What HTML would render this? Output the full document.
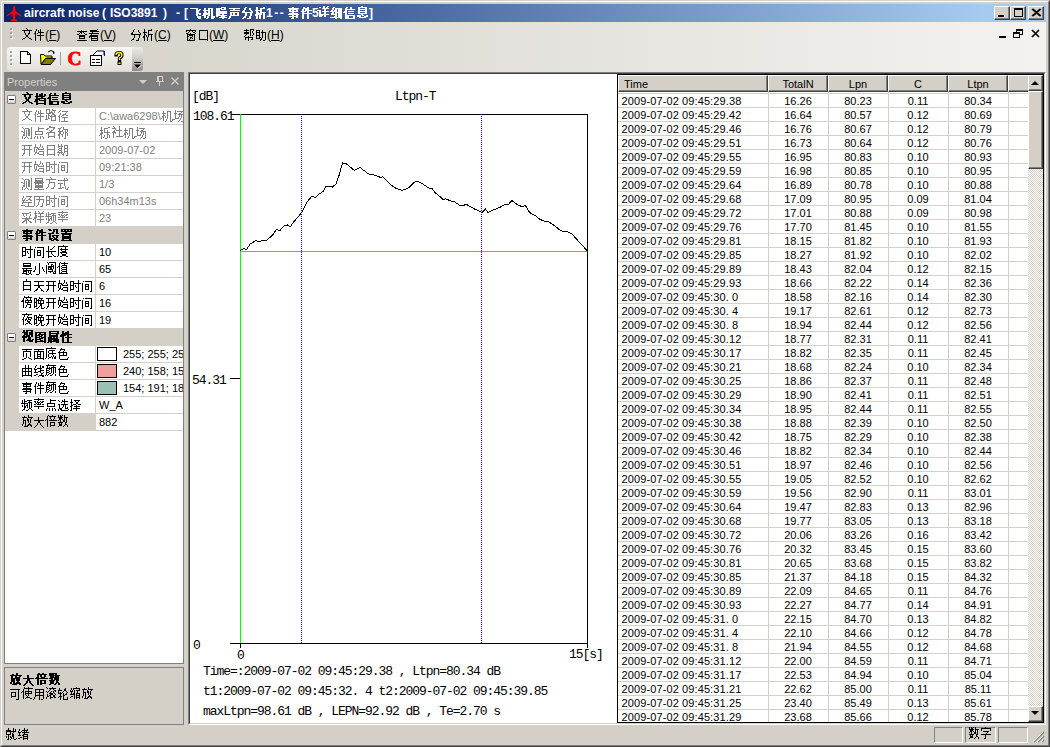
<!DOCTYPE html><html><head><meta charset="utf-8"><style>
html,body{margin:0;padding:0}
body{width:1050px;height:747px;overflow:hidden;position:relative;background:#D4D0C8;font-family:"Liberation Sans",sans-serif;font-size:11px;color:#000}
div{position:absolute;box-sizing:border-box}
.t{white-space:nowrap;line-height:1}
.m{font-family:"Liberation Mono",monospace}
svg{position:absolute;left:0;top:0}
</style></head><body>
<div style="left:0px;top:0px;width:1050px;height:747px;border-top:1px solid #D4D0C8;border-left:1px solid #D4D0C8;border-right:1px solid #404040;border-bottom:1px solid #404040"></div>
<div style="left:1px;top:1px;width:1048px;height:745px;border-top:1px solid #fff;border-left:1px solid #fff;border-right:1px solid #808080;border-bottom:1px solid #808080"></div>
<div style="left:4px;top:4px;width:1042px;height:18px;background:linear-gradient(to right,#0A246A,#A6CAF0 94%)"></div>
<div class="t" style="left:24px;top:6px;color:#fff;font-weight:bold;font-size:12px;margin-top:1px">aircraft noise</div>
<div class="t" style="left:102px;top:6px;color:#fff;font-weight:bold;font-size:12px;margin-top:1px">(</div>
<div class="t" style="left:110px;top:6px;color:#fff;font-weight:bold;font-size:12px;margin-top:1px">ISO3891</div>
<div class="t" style="left:163px;top:6px;color:#fff;font-weight:bold;font-size:12px;margin-top:1px">)</div>
<div class="t" style="left:176px;top:6px;color:#fff;font-weight:bold;font-size:12px;margin-top:1px">-</div>
<div class="t" style="left:184px;top:6px;color:#fff;font-weight:bold;font-size:12px;margin-top:1px">[</div>
<div class="t" style="left:266px;top:6px;color:#fff;font-weight:bold;font-size:12px;margin-top:1px;letter-spacing:1.6px">1--</div>
<div class="t" style="left:312px;top:6px;color:#fff;font-weight:bold;font-size:12px;margin-top:1px">5</div>
<div class="t" style="left:369px;top:6px;color:#fff;font-weight:bold;font-size:12px;margin-top:1px">]</div>
<svg width="1050" height="747" style="z-index:2"><path d="M13.5 6 H15 L15.5 11 L21.5 15.5 V16.5 L15.5 13.5 L15 19 L17 20 V21 H11 V20 L13 19 L12.5 13.5 L6.5 16.5 V15.5 L12.5 11 Z" fill="#F00"/></svg>
<div style="left:994px;top:6px;width:16px;height:14px;background:#D4D0C8;border-top:1px solid #fff;border-left:1px solid #fff;border-right:1px solid #404040;border-bottom:1px solid #404040;box-shadow:inset -1px -1px 0 #808080"></div>
<div style="left:1010px;top:6px;width:16px;height:14px;background:#D4D0C8;border-top:1px solid #fff;border-left:1px solid #fff;border-right:1px solid #404040;border-bottom:1px solid #404040;box-shadow:inset -1px -1px 0 #808080"></div>
<div style="left:1028px;top:6px;width:16px;height:14px;background:#D4D0C8;border-top:1px solid #fff;border-left:1px solid #fff;border-right:1px solid #404040;border-bottom:1px solid #404040;box-shadow:inset -1px -1px 0 #808080"></div>
<div style="left:998px;top:15px;width:6px;height:2px;background:#000"></div>
<div style="left:1014px;top:8px;width:9px;height:9px;border:1px solid #000;border-top:2px solid #000"></div>
<svg width="1050" height="747" style="z-index:2"><path d="M1032 9 L1040 16 M1040 9 L1032 16 M1033 9 L1041 16 M1041 9 L1033 16" stroke="#000" stroke-width="1.2" fill="none"/></svg>
<div style="left:4px;top:22px;width:1042px;height:50px;background:linear-gradient(to right,#D4D0C8 0%,#DAD7CF 20%,#F3F2EF 100%)"></div>
<div style="left:11px;top:29px;width:2px;height:2px;background:#fff"></div>
<div style="left:10px;top:28px;width:2px;height:2px;background:#A0A0A0"></div>
<div style="left:11px;top:33px;width:2px;height:2px;background:#fff"></div>
<div style="left:10px;top:32px;width:2px;height:2px;background:#A0A0A0"></div>
<div style="left:11px;top:37px;width:2px;height:2px;background:#fff"></div>
<div style="left:10px;top:36px;width:2px;height:2px;background:#A0A0A0"></div>
<div class="t" style="left:45px;top:29px;font-size:12px">(<u>F</u>)</div>
<div class="t" style="left:100px;top:29px;font-size:12px">(<u>V</u>)</div>
<div class="t" style="left:154px;top:29px;font-size:12px">(<u>C</u>)</div>
<div class="t" style="left:209px;top:29px;font-size:12px">(<u>W</u>)</div>
<div class="t" style="left:267px;top:29px;font-size:12px">(<u>H</u>)</div>
<div style="left:999px;top:36px;width:7px;height:2px;background:#000"></div>
<div style="left:1016px;top:29px;width:7px;height:6px;border:1px solid #000;border-top:2px solid #000"></div>
<div style="left:1013px;top:32px;width:7px;height:6px;border:1px solid #000;border-top:2px solid #000;background:#F0EFEC"></div>
<svg width="1050" height="747" style="z-index:2"><path d="M1032 30 L1039 37 M1039 30 L1032 37" stroke="#000" stroke-width="1.6" fill="none"/></svg>
<div style="left:7px;top:47px;width:126px;height:24px;background:linear-gradient(to bottom,#F8F7F4,#E3E0D9);border-radius:3px 0 0 3px"></div>
<div style="left:132px;top:47px;width:11px;height:24px;background:linear-gradient(to bottom,#ECEAE6 0%,#D0CEC8 45%,#8C8C8C 100%);border-radius:0 3px 3px 0"></div>
<div style="left:11px;top:52px;width:2px;height:2px;background:#fff"></div>
<div style="left:10px;top:51px;width:2px;height:2px;background:#A0A0A0"></div>
<div style="left:11px;top:56px;width:2px;height:2px;background:#fff"></div>
<div style="left:10px;top:55px;width:2px;height:2px;background:#A0A0A0"></div>
<div style="left:11px;top:60px;width:2px;height:2px;background:#fff"></div>
<div style="left:10px;top:59px;width:2px;height:2px;background:#A0A0A0"></div>
<div style="left:11px;top:64px;width:2px;height:2px;background:#fff"></div>
<div style="left:10px;top:63px;width:2px;height:2px;background:#A0A0A0"></div>
<div style="left:60px;top:52px;width:1px;height:13px;background:#A0A0A0"></div>
<svg width="1050" height="747" style="z-index:2">
<path d="M20.5 51.5 H27.5 L30.5 54.5 V63.5 H20.5 Z" fill="#fff" stroke="#000" shape-rendering="crispEdges"/><path d="M27.5 52 V54.5 H30" stroke="#000" fill="none" shape-rendering="crispEdges"/>
<path d="M40.5 54.5 H44 L45 56 H52 V58 H46 L41 64 Z" fill="#FFFF00" stroke="#000"/>
<path d="M41 64.5 L46 58.5 H55.5 L50.5 64.5 Z" fill="#808000" stroke="#000"/>
<path d="M48 52 Q51 49 54 52" stroke="#000" fill="none"/><path d="M53 51 L55 53 L53 54" fill="#000"/>
<text x="67.5" y="64.8" font-family="Liberation Serif" font-weight="bold" font-size="19.5" fill="#F00" stroke="#F00" stroke-width="0.8">C</text>
<rect x="90.5" y="55.5" width="11" height="10" fill="#fff" stroke="#000"/>
<path d="M92 59.5 H95 M96 59.5 H100 M92 62.5 H95 M96 62.5 H100" stroke="#000"/>
<path d="M93 55 L97 51 H104 V55" fill="#fff" stroke="#000"/><path d="M104.5 51 V56" stroke="#00F"/>
<path d="M116 55 Q116 52.5 119 52.5 Q122 52.5 122 55 Q122 57 119.5 58 V60.5" stroke="#000" stroke-width="3.2" fill="none" stroke-linecap="square"/><rect x="117.5" y="61.5" width="4" height="3.5" fill="#000"/><path d="M116 55 Q116 52.5 119 52.5 Q122 52.5 122 55 Q122 57 119.5 58 V60" stroke="#FF0" stroke-width="1.3" fill="none"/><rect x="118.5" y="62.5" width="2" height="1.5" fill="#FF0"/>
<path d="M134 62.5 H141" stroke="#000" shape-rendering="crispEdges"/><path d="M134 64.5 H141 L137.5 68 Z" fill="#000"/><path d="M138 68.5 L141 65.5" stroke="#fff" stroke-width="0.8"/>
</svg>
<div style="left:4px;top:72px;width:180px;height:19px;background:#808080"></div>
<div class="t" style="left:7px;top:77px;color:#D4D0C8;font-size:11px">Properties</div>
<svg width="1050" height="747" style="z-index:2">
<path d="M139 80 H147 L143 84 Z" fill="#D4D0C8"/>
<path d="M157 76.5 H162.5 V81 M157.5 76 V81.5 M158.5 76 V81.5 M156 81.5 H164 M159.5 82 V86" stroke="#D4D0C8" fill="none" shape-rendering="crispEdges"/>
<path d="M171.5 77.5 L178.5 84.5 M178.5 77.5 L171.5 84.5" stroke="#D4D0C8" stroke-width="1.3" fill="none"/>
</svg>
<div style="left:4px;top:91px;width:180px;height:573px;background:#fff;border-left:1px solid #808080;border-bottom:1px solid #808080;border-right:1px solid #808080"></div>
<div style="left:5px;top:91px;width:14px;height:340px;background:#D4D0C8"></div>
<div style="left:5px;top:91px;width:178px;height:17px;background:#D4D0C8"></div>
<div style="left:7px;top:95px;width:9px;height:9px;border:1px solid #808080;border-radius:1px;background:linear-gradient(#fff 30%,#D4D0C8)"></div>
<div style="left:9px;top:99px;width:5px;height:1px;background:#000"></div>
<div style="left:19px;top:108px;width:77px;height:17px;background:#fff;border-bottom:1px solid #D4D0C8;border-right:1px solid #D4D0C8"></div>
<div style="left:96px;top:108px;width:87px;height:17px;background:#fff;border-bottom:1px solid #D4D0C8"></div>
<div style="left:96px;top:108px;width:87px;height:17px;overflow:hidden"><div class="t" style="left:3px;top:3px;color:#808080">C:\awa6298\</div></div>
<div style="left:19px;top:125px;width:77px;height:17px;background:#fff;border-bottom:1px solid #D4D0C8;border-right:1px solid #D4D0C8"></div>
<div style="left:96px;top:125px;width:87px;height:17px;background:#fff;border-bottom:1px solid #D4D0C8"></div>
<div style="left:19px;top:142px;width:77px;height:17px;background:#fff;border-bottom:1px solid #D4D0C8;border-right:1px solid #D4D0C8"></div>
<div style="left:96px;top:142px;width:87px;height:17px;background:#fff;border-bottom:1px solid #D4D0C8"></div>
<div style="left:96px;top:142px;width:87px;height:17px;overflow:hidden"><div class="t" style="left:3px;top:3px;color:#808080">2009-07-02</div></div>
<div style="left:19px;top:159px;width:77px;height:17px;background:#fff;border-bottom:1px solid #D4D0C8;border-right:1px solid #D4D0C8"></div>
<div style="left:96px;top:159px;width:87px;height:17px;background:#fff;border-bottom:1px solid #D4D0C8"></div>
<div style="left:96px;top:159px;width:87px;height:17px;overflow:hidden"><div class="t" style="left:3px;top:3px;color:#808080">09:21:38</div></div>
<div style="left:19px;top:176px;width:77px;height:17px;background:#fff;border-bottom:1px solid #D4D0C8;border-right:1px solid #D4D0C8"></div>
<div style="left:96px;top:176px;width:87px;height:17px;background:#fff;border-bottom:1px solid #D4D0C8"></div>
<div style="left:96px;top:176px;width:87px;height:17px;overflow:hidden"><div class="t" style="left:3px;top:3px;color:#808080">1/3</div></div>
<div style="left:19px;top:193px;width:77px;height:17px;background:#fff;border-bottom:1px solid #D4D0C8;border-right:1px solid #D4D0C8"></div>
<div style="left:96px;top:193px;width:87px;height:17px;background:#fff;border-bottom:1px solid #D4D0C8"></div>
<div style="left:96px;top:193px;width:87px;height:17px;overflow:hidden"><div class="t" style="left:3px;top:3px;color:#808080">06h34m13s</div></div>
<div style="left:19px;top:210px;width:77px;height:17px;background:#fff;border-bottom:1px solid #D4D0C8;border-right:1px solid #D4D0C8"></div>
<div style="left:96px;top:210px;width:87px;height:17px;background:#fff;border-bottom:1px solid #D4D0C8"></div>
<div style="left:96px;top:210px;width:87px;height:17px;overflow:hidden"><div class="t" style="left:3px;top:3px;color:#808080">23</div></div>
<div style="left:5px;top:227px;width:178px;height:17px;background:#D4D0C8"></div>
<div style="left:7px;top:231px;width:9px;height:9px;border:1px solid #808080;border-radius:1px;background:linear-gradient(#fff 30%,#D4D0C8)"></div>
<div style="left:9px;top:235px;width:5px;height:1px;background:#000"></div>
<div style="left:19px;top:244px;width:77px;height:17px;background:#fff;border-bottom:1px solid #D4D0C8;border-right:1px solid #D4D0C8"></div>
<div style="left:96px;top:244px;width:87px;height:17px;background:#fff;border-bottom:1px solid #D4D0C8"></div>
<div style="left:96px;top:244px;width:87px;height:17px;overflow:hidden"><div class="t" style="left:3px;top:3px;color:#000">10</div></div>
<div style="left:19px;top:261px;width:77px;height:17px;background:#fff;border-bottom:1px solid #D4D0C8;border-right:1px solid #D4D0C8"></div>
<div style="left:96px;top:261px;width:87px;height:17px;background:#fff;border-bottom:1px solid #D4D0C8"></div>
<div style="left:96px;top:261px;width:87px;height:17px;overflow:hidden"><div class="t" style="left:3px;top:3px;color:#000">65</div></div>
<div style="left:19px;top:278px;width:77px;height:17px;background:#fff;border-bottom:1px solid #D4D0C8;border-right:1px solid #D4D0C8"></div>
<div style="left:96px;top:278px;width:87px;height:17px;background:#fff;border-bottom:1px solid #D4D0C8"></div>
<div style="left:96px;top:278px;width:87px;height:17px;overflow:hidden"><div class="t" style="left:3px;top:3px;color:#000">6</div></div>
<div style="left:19px;top:295px;width:77px;height:17px;background:#fff;border-bottom:1px solid #D4D0C8;border-right:1px solid #D4D0C8"></div>
<div style="left:96px;top:295px;width:87px;height:17px;background:#fff;border-bottom:1px solid #D4D0C8"></div>
<div style="left:96px;top:295px;width:87px;height:17px;overflow:hidden"><div class="t" style="left:3px;top:3px;color:#000">16</div></div>
<div style="left:19px;top:312px;width:77px;height:17px;background:#fff;border-bottom:1px solid #D4D0C8;border-right:1px solid #D4D0C8"></div>
<div style="left:96px;top:312px;width:87px;height:17px;background:#fff;border-bottom:1px solid #D4D0C8"></div>
<div style="left:96px;top:312px;width:87px;height:17px;overflow:hidden"><div class="t" style="left:3px;top:3px;color:#000">19</div></div>
<div style="left:5px;top:329px;width:178px;height:17px;background:#D4D0C8"></div>
<div style="left:7px;top:333px;width:9px;height:9px;border:1px solid #808080;border-radius:1px;background:linear-gradient(#fff 30%,#D4D0C8)"></div>
<div style="left:9px;top:337px;width:5px;height:1px;background:#000"></div>
<div style="left:19px;top:346px;width:77px;height:17px;background:#fff;border-bottom:1px solid #D4D0C8;border-right:1px solid #D4D0C8"></div>
<div style="left:96px;top:346px;width:87px;height:17px;background:#fff;border-bottom:1px solid #D4D0C8"></div>
<div style="left:97px;top:347px;width:20px;height:14px;background:#FFFFFF;border:1px solid #000"></div>
<div style="left:96px;top:346px;width:87px;height:17px;overflow:hidden"><div class="t" style="left:27px;top:3px">255; 255; 255</div></div>
<div style="left:19px;top:363px;width:77px;height:17px;background:#fff;border-bottom:1px solid #D4D0C8;border-right:1px solid #D4D0C8"></div>
<div style="left:96px;top:363px;width:87px;height:17px;background:#fff;border-bottom:1px solid #D4D0C8"></div>
<div style="left:97px;top:364px;width:20px;height:14px;background:#F09E9E;border:1px solid #000"></div>
<div style="left:96px;top:363px;width:87px;height:17px;overflow:hidden"><div class="t" style="left:27px;top:3px">240; 158; 158</div></div>
<div style="left:19px;top:380px;width:77px;height:17px;background:#fff;border-bottom:1px solid #D4D0C8;border-right:1px solid #D4D0C8"></div>
<div style="left:96px;top:380px;width:87px;height:17px;background:#fff;border-bottom:1px solid #D4D0C8"></div>
<div style="left:97px;top:381px;width:20px;height:14px;background:#9ABFB5;border:1px solid #000"></div>
<div style="left:96px;top:380px;width:87px;height:17px;overflow:hidden"><div class="t" style="left:27px;top:3px">154; 191; 181</div></div>
<div style="left:19px;top:397px;width:77px;height:17px;background:#fff;border-bottom:1px solid #D4D0C8;border-right:1px solid #D4D0C8"></div>
<div style="left:96px;top:397px;width:87px;height:17px;background:#fff;border-bottom:1px solid #D4D0C8"></div>
<div style="left:96px;top:397px;width:87px;height:17px;overflow:hidden"><div class="t" style="left:3px;top:3px;color:#000">W_A</div></div>
<div style="left:19px;top:414px;width:77px;height:17px;background:#D4D0C8;border-bottom:1px solid #D4D0C8;border-right:1px solid #D4D0C8"></div>
<div style="left:96px;top:414px;width:87px;height:17px;background:#fff;border-bottom:1px solid #D4D0C8"></div>
<div style="left:96px;top:414px;width:87px;height:17px;overflow:hidden"><div class="t" style="left:3px;top:3px;color:#000">882</div></div>
<div style="left:4px;top:667px;width:180px;height:58px;background:#D4D0C8;border:1px solid #808080"></div>
<div style="left:188px;top:72px;width:858px;height:653px;border-top:1px solid #808080;border-left:1px solid #808080;border-right:1px solid #fff;border-bottom:1px solid #fff"></div>
<div style="left:189px;top:73px;width:856px;height:651px;border-top:1px solid #404040;border-left:1px solid #404040;border-right:1px solid #D4D0C8;border-bottom:1px solid #D4D0C8"></div>
<div style="left:190px;top:74px;width:427px;height:649px;background:#fff"></div>
<svg width="1050" height="747" style="z-index:1" shape-rendering="crispEdges">
<path d="M231 114.5 H587.5 V648 M230 643.5 H588 M240.5 643 V648 M230 378.5 H240" stroke="#000" fill="none"/>
<path d="M240.5 114 V643 M240 251.5 H587" stroke="#00FF00" fill="none"/>
<path d="M301.5 114 V643 M481.5 114 V643" stroke="#0000FF" stroke-dasharray="1 1" fill="none"/>
</svg>
<svg width="1050" height="747" style="z-index:1"><polyline points="240,251 240.8,250 243.3,248.7 246.7,249.2 250,244.2 255.8,240.5 258.3,241.3 263.3,240.8 266.7,240.5 273.3,234.2 276.3,229.5 280,230.5 284.2,225.5 287.5,225 290.3,226.7 293.3,222.5 297.5,217.5 301.7,212.5 306.7,202.5 311.7,196.3 315.8,197.5 319.2,193.7 322.5,192.5 325.8,186.7 329.2,186.3 332.5,187 335.8,184.2 339.2,175 342.5,163 345.8,163.3 354.2,170.3 360,167.5 370,175 373.3,174.7 380.8,177.5 382.5,176.7 391.7,185.5 396.7,188.7 402.5,190.3 408.3,188 414.2,182.2 417.7,181.3 423,184.2 428.8,188 432.2,188.7 435.5,193 439.7,196.3 443.8,200 445.5,198.7 452.2,201.7 453.8,201.3 459.7,205.3 463,205.8 466,204.2 470.5,206.7 475.5,209.5 482.2,212.5 485.5,209.2 488,212.5 493,210 499.7,207.5 503.8,205 508.8,204.2 511.7,200.5 518,205 521.3,206.3 525.5,205.8 529.7,212.5 536.3,216.3 539.7,219.2 546.3,222 548,221.3 554.7,225.8 558.8,229.2 563.8,232 566.3,231.3 572.2,234.2 578,240.8 586.3,249.7 587,251" stroke="#000" stroke-width="1" fill="none" shape-rendering="crispEdges"/></svg>
<div class="t" style="left:192px;top:90px;font-family:'Liberation Mono',monospace;font-size:13px;letter-spacing:-1.05px">[dB]</div>
<div class="t" style="left:395px;top:90px;font-family:'Liberation Mono',monospace;font-size:13px;letter-spacing:-1.05px">Ltpn-T</div>
<div class="t" style="left:193px;top:110px;font-family:'Liberation Mono',monospace;font-size:13px;letter-spacing:-1.05px">108.61</div>
<div class="t" style="left:192px;top:374px;font-family:'Liberation Mono',monospace;font-size:13px;letter-spacing:-1.05px">54.31</div>
<div class="t" style="left:193px;top:639px;font-family:'Liberation Mono',monospace;font-size:13px;letter-spacing:-1.05px">0</div>
<div class="t" style="left:237px;top:649px;font-family:'Liberation Mono',monospace;font-size:13px;letter-spacing:-1.05px">0</div>
<div class="t" style="left:569px;top:648px;font-family:'Liberation Mono',monospace;font-size:13px;letter-spacing:-1.05px">15[s]</div>
<div class="t" style="left:203px;top:665px;font-family:'Liberation Mono',monospace;font-size:13px;letter-spacing:-1.05px">Time=:2009-07-02 09:45:29.38 , Ltpn=80.34 dB</div>
<div class="t" style="left:203px;top:685px;font-family:'Liberation Mono',monospace;font-size:13px;letter-spacing:-1.05px">t1:2009-07-02 09:45:32. 4 t2:2009-07-02 09:45:39.85</div>
<div class="t" style="left:203px;top:705px;font-family:'Liberation Mono',monospace;font-size:13px;letter-spacing:-1.05px">maxLtpn=98.61 dB , LEPN=92.92 dB , Te=2.70 s</div>
<div style="left:617px;top:74px;width:427px;height:649px;background:#fff;border:1px solid #000"></div>
<div style="left:618px;top:75px;width:150px;height:17px;background:#D4D0C8;border-top:1px solid #fff;border-left:1px solid #fff;border-right:1px solid #404040;border-bottom:1px solid #404040;box-shadow:inset -1px -1px 0 #808080"></div>
<div class="t" style="left:624px;top:79px;">Time</div>
<div style="left:768px;top:75px;width:60px;height:17px;background:#D4D0C8;border-top:1px solid #fff;border-left:1px solid #fff;border-right:1px solid #404040;border-bottom:1px solid #404040;box-shadow:inset -1px -1px 0 #808080"></div>
<div class="t" style="left:768px;top:79px;width:60px;text-align:center">TotalN</div>
<div style="left:828px;top:75px;width:60px;height:17px;background:#D4D0C8;border-top:1px solid #fff;border-left:1px solid #fff;border-right:1px solid #404040;border-bottom:1px solid #404040;box-shadow:inset -1px -1px 0 #808080"></div>
<div class="t" style="left:828px;top:79px;width:60px;text-align:center">Lpn</div>
<div style="left:888px;top:75px;width:60px;height:17px;background:#D4D0C8;border-top:1px solid #fff;border-left:1px solid #fff;border-right:1px solid #404040;border-bottom:1px solid #404040;box-shadow:inset -1px -1px 0 #808080"></div>
<div class="t" style="left:888px;top:79px;width:60px;text-align:center">C</div>
<div style="left:948px;top:75px;width:60px;height:17px;background:#D4D0C8;border-top:1px solid #fff;border-left:1px solid #fff;border-right:1px solid #404040;border-bottom:1px solid #404040;box-shadow:inset -1px -1px 0 #808080"></div>
<div class="t" style="left:948px;top:79px;width:60px;text-align:center">Ltpn</div>
<div style="left:1008px;top:75px;width:20px;height:17px;background:#D4D0C8;border-top:1px solid #fff;border-left:1px solid #fff;border-bottom:1px solid #404040;box-shadow:inset 0 -1px 0 #808080"></div>
<div style="left:618px;top:93px;width:410px;height:1px;background:#D4D0C8"></div>
<div class="t" style="left:621.5px;top:96px;letter-spacing:0.11px">2009-07-02 09:45:29.38</div>
<div class="t" style="left:768px;top:96px;width:60px;text-align:center">16.26</div>
<div class="t" style="left:828px;top:96px;width:60px;text-align:center">80.23</div>
<div class="t" style="left:888px;top:96px;width:60px;text-align:center">0.11</div>
<div class="t" style="left:948px;top:96px;width:60px;text-align:center">80.34</div>
<div style="left:618px;top:107px;width:410px;height:1px;background:#D4D0C8"></div>
<div class="t" style="left:621.5px;top:110px;letter-spacing:0.11px">2009-07-02 09:45:29.42</div>
<div class="t" style="left:768px;top:110px;width:60px;text-align:center">16.64</div>
<div class="t" style="left:828px;top:110px;width:60px;text-align:center">80.57</div>
<div class="t" style="left:888px;top:110px;width:60px;text-align:center">0.12</div>
<div class="t" style="left:948px;top:110px;width:60px;text-align:center">80.69</div>
<div style="left:618px;top:121px;width:410px;height:1px;background:#D4D0C8"></div>
<div class="t" style="left:621.5px;top:124px;letter-spacing:0.11px">2009-07-02 09:45:29.46</div>
<div class="t" style="left:768px;top:124px;width:60px;text-align:center">16.76</div>
<div class="t" style="left:828px;top:124px;width:60px;text-align:center">80.67</div>
<div class="t" style="left:888px;top:124px;width:60px;text-align:center">0.12</div>
<div class="t" style="left:948px;top:124px;width:60px;text-align:center">80.79</div>
<div style="left:618px;top:135px;width:410px;height:1px;background:#D4D0C8"></div>
<div class="t" style="left:621.5px;top:138px;letter-spacing:0.11px">2009-07-02 09:45:29.51</div>
<div class="t" style="left:768px;top:138px;width:60px;text-align:center">16.73</div>
<div class="t" style="left:828px;top:138px;width:60px;text-align:center">80.64</div>
<div class="t" style="left:888px;top:138px;width:60px;text-align:center">0.12</div>
<div class="t" style="left:948px;top:138px;width:60px;text-align:center">80.76</div>
<div style="left:618px;top:149px;width:410px;height:1px;background:#D4D0C8"></div>
<div class="t" style="left:621.5px;top:152px;letter-spacing:0.11px">2009-07-02 09:45:29.55</div>
<div class="t" style="left:768px;top:152px;width:60px;text-align:center">16.95</div>
<div class="t" style="left:828px;top:152px;width:60px;text-align:center">80.83</div>
<div class="t" style="left:888px;top:152px;width:60px;text-align:center">0.10</div>
<div class="t" style="left:948px;top:152px;width:60px;text-align:center">80.93</div>
<div style="left:618px;top:163px;width:410px;height:1px;background:#D4D0C8"></div>
<div class="t" style="left:621.5px;top:166px;letter-spacing:0.11px">2009-07-02 09:45:29.59</div>
<div class="t" style="left:768px;top:166px;width:60px;text-align:center">16.98</div>
<div class="t" style="left:828px;top:166px;width:60px;text-align:center">80.85</div>
<div class="t" style="left:888px;top:166px;width:60px;text-align:center">0.10</div>
<div class="t" style="left:948px;top:166px;width:60px;text-align:center">80.95</div>
<div style="left:618px;top:177px;width:410px;height:1px;background:#D4D0C8"></div>
<div class="t" style="left:621.5px;top:180px;letter-spacing:0.11px">2009-07-02 09:45:29.64</div>
<div class="t" style="left:768px;top:180px;width:60px;text-align:center">16.89</div>
<div class="t" style="left:828px;top:180px;width:60px;text-align:center">80.78</div>
<div class="t" style="left:888px;top:180px;width:60px;text-align:center">0.10</div>
<div class="t" style="left:948px;top:180px;width:60px;text-align:center">80.88</div>
<div style="left:618px;top:191px;width:410px;height:1px;background:#D4D0C8"></div>
<div class="t" style="left:621.5px;top:194px;letter-spacing:0.11px">2009-07-02 09:45:29.68</div>
<div class="t" style="left:768px;top:194px;width:60px;text-align:center">17.09</div>
<div class="t" style="left:828px;top:194px;width:60px;text-align:center">80.95</div>
<div class="t" style="left:888px;top:194px;width:60px;text-align:center">0.09</div>
<div class="t" style="left:948px;top:194px;width:60px;text-align:center">81.04</div>
<div style="left:618px;top:205px;width:410px;height:1px;background:#D4D0C8"></div>
<div class="t" style="left:621.5px;top:208px;letter-spacing:0.11px">2009-07-02 09:45:29.72</div>
<div class="t" style="left:768px;top:208px;width:60px;text-align:center">17.01</div>
<div class="t" style="left:828px;top:208px;width:60px;text-align:center">80.88</div>
<div class="t" style="left:888px;top:208px;width:60px;text-align:center">0.09</div>
<div class="t" style="left:948px;top:208px;width:60px;text-align:center">80.98</div>
<div style="left:618px;top:219px;width:410px;height:1px;background:#D4D0C8"></div>
<div class="t" style="left:621.5px;top:222px;letter-spacing:0.11px">2009-07-02 09:45:29.76</div>
<div class="t" style="left:768px;top:222px;width:60px;text-align:center">17.70</div>
<div class="t" style="left:828px;top:222px;width:60px;text-align:center">81.45</div>
<div class="t" style="left:888px;top:222px;width:60px;text-align:center">0.10</div>
<div class="t" style="left:948px;top:222px;width:60px;text-align:center">81.55</div>
<div style="left:618px;top:233px;width:410px;height:1px;background:#D4D0C8"></div>
<div class="t" style="left:621.5px;top:236px;letter-spacing:0.11px">2009-07-02 09:45:29.81</div>
<div class="t" style="left:768px;top:236px;width:60px;text-align:center">18.15</div>
<div class="t" style="left:828px;top:236px;width:60px;text-align:center">81.82</div>
<div class="t" style="left:888px;top:236px;width:60px;text-align:center">0.10</div>
<div class="t" style="left:948px;top:236px;width:60px;text-align:center">81.93</div>
<div style="left:618px;top:247px;width:410px;height:1px;background:#D4D0C8"></div>
<div class="t" style="left:621.5px;top:250px;letter-spacing:0.11px">2009-07-02 09:45:29.85</div>
<div class="t" style="left:768px;top:250px;width:60px;text-align:center">18.27</div>
<div class="t" style="left:828px;top:250px;width:60px;text-align:center">81.92</div>
<div class="t" style="left:888px;top:250px;width:60px;text-align:center">0.10</div>
<div class="t" style="left:948px;top:250px;width:60px;text-align:center">82.02</div>
<div style="left:618px;top:261px;width:410px;height:1px;background:#D4D0C8"></div>
<div class="t" style="left:621.5px;top:264px;letter-spacing:0.11px">2009-07-02 09:45:29.89</div>
<div class="t" style="left:768px;top:264px;width:60px;text-align:center">18.43</div>
<div class="t" style="left:828px;top:264px;width:60px;text-align:center">82.04</div>
<div class="t" style="left:888px;top:264px;width:60px;text-align:center">0.12</div>
<div class="t" style="left:948px;top:264px;width:60px;text-align:center">82.15</div>
<div style="left:618px;top:275px;width:410px;height:1px;background:#D4D0C8"></div>
<div class="t" style="left:621.5px;top:278px;letter-spacing:0.11px">2009-07-02 09:45:29.93</div>
<div class="t" style="left:768px;top:278px;width:60px;text-align:center">18.66</div>
<div class="t" style="left:828px;top:278px;width:60px;text-align:center">82.22</div>
<div class="t" style="left:888px;top:278px;width:60px;text-align:center">0.14</div>
<div class="t" style="left:948px;top:278px;width:60px;text-align:center">82.36</div>
<div style="left:618px;top:289px;width:410px;height:1px;background:#D4D0C8"></div>
<div class="t" style="left:621.5px;top:292px;letter-spacing:0.11px">2009-07-02 09:45:30. 0</div>
<div class="t" style="left:768px;top:292px;width:60px;text-align:center">18.58</div>
<div class="t" style="left:828px;top:292px;width:60px;text-align:center">82.16</div>
<div class="t" style="left:888px;top:292px;width:60px;text-align:center">0.14</div>
<div class="t" style="left:948px;top:292px;width:60px;text-align:center">82.30</div>
<div style="left:618px;top:303px;width:410px;height:1px;background:#D4D0C8"></div>
<div class="t" style="left:621.5px;top:306px;letter-spacing:0.11px">2009-07-02 09:45:30. 4</div>
<div class="t" style="left:768px;top:306px;width:60px;text-align:center">19.17</div>
<div class="t" style="left:828px;top:306px;width:60px;text-align:center">82.61</div>
<div class="t" style="left:888px;top:306px;width:60px;text-align:center">0.12</div>
<div class="t" style="left:948px;top:306px;width:60px;text-align:center">82.73</div>
<div style="left:618px;top:317px;width:410px;height:1px;background:#D4D0C8"></div>
<div class="t" style="left:621.5px;top:320px;letter-spacing:0.11px">2009-07-02 09:45:30. 8</div>
<div class="t" style="left:768px;top:320px;width:60px;text-align:center">18.94</div>
<div class="t" style="left:828px;top:320px;width:60px;text-align:center">82.44</div>
<div class="t" style="left:888px;top:320px;width:60px;text-align:center">0.12</div>
<div class="t" style="left:948px;top:320px;width:60px;text-align:center">82.56</div>
<div style="left:618px;top:331px;width:410px;height:1px;background:#D4D0C8"></div>
<div class="t" style="left:621.5px;top:334px;letter-spacing:0.11px">2009-07-02 09:45:30.12</div>
<div class="t" style="left:768px;top:334px;width:60px;text-align:center">18.77</div>
<div class="t" style="left:828px;top:334px;width:60px;text-align:center">82.31</div>
<div class="t" style="left:888px;top:334px;width:60px;text-align:center">0.11</div>
<div class="t" style="left:948px;top:334px;width:60px;text-align:center">82.41</div>
<div style="left:618px;top:345px;width:410px;height:1px;background:#D4D0C8"></div>
<div class="t" style="left:621.5px;top:348px;letter-spacing:0.11px">2009-07-02 09:45:30.17</div>
<div class="t" style="left:768px;top:348px;width:60px;text-align:center">18.82</div>
<div class="t" style="left:828px;top:348px;width:60px;text-align:center">82.35</div>
<div class="t" style="left:888px;top:348px;width:60px;text-align:center">0.11</div>
<div class="t" style="left:948px;top:348px;width:60px;text-align:center">82.45</div>
<div style="left:618px;top:359px;width:410px;height:1px;background:#D4D0C8"></div>
<div class="t" style="left:621.5px;top:362px;letter-spacing:0.11px">2009-07-02 09:45:30.21</div>
<div class="t" style="left:768px;top:362px;width:60px;text-align:center">18.68</div>
<div class="t" style="left:828px;top:362px;width:60px;text-align:center">82.24</div>
<div class="t" style="left:888px;top:362px;width:60px;text-align:center">0.10</div>
<div class="t" style="left:948px;top:362px;width:60px;text-align:center">82.34</div>
<div style="left:618px;top:373px;width:410px;height:1px;background:#D4D0C8"></div>
<div class="t" style="left:621.5px;top:376px;letter-spacing:0.11px">2009-07-02 09:45:30.25</div>
<div class="t" style="left:768px;top:376px;width:60px;text-align:center">18.86</div>
<div class="t" style="left:828px;top:376px;width:60px;text-align:center">82.37</div>
<div class="t" style="left:888px;top:376px;width:60px;text-align:center">0.11</div>
<div class="t" style="left:948px;top:376px;width:60px;text-align:center">82.48</div>
<div style="left:618px;top:387px;width:410px;height:1px;background:#D4D0C8"></div>
<div class="t" style="left:621.5px;top:390px;letter-spacing:0.11px">2009-07-02 09:45:30.29</div>
<div class="t" style="left:768px;top:390px;width:60px;text-align:center">18.90</div>
<div class="t" style="left:828px;top:390px;width:60px;text-align:center">82.41</div>
<div class="t" style="left:888px;top:390px;width:60px;text-align:center">0.11</div>
<div class="t" style="left:948px;top:390px;width:60px;text-align:center">82.51</div>
<div style="left:618px;top:401px;width:410px;height:1px;background:#D4D0C8"></div>
<div class="t" style="left:621.5px;top:404px;letter-spacing:0.11px">2009-07-02 09:45:30.34</div>
<div class="t" style="left:768px;top:404px;width:60px;text-align:center">18.95</div>
<div class="t" style="left:828px;top:404px;width:60px;text-align:center">82.44</div>
<div class="t" style="left:888px;top:404px;width:60px;text-align:center">0.11</div>
<div class="t" style="left:948px;top:404px;width:60px;text-align:center">82.55</div>
<div style="left:618px;top:415px;width:410px;height:1px;background:#D4D0C8"></div>
<div class="t" style="left:621.5px;top:418px;letter-spacing:0.11px">2009-07-02 09:45:30.38</div>
<div class="t" style="left:768px;top:418px;width:60px;text-align:center">18.88</div>
<div class="t" style="left:828px;top:418px;width:60px;text-align:center">82.39</div>
<div class="t" style="left:888px;top:418px;width:60px;text-align:center">0.10</div>
<div class="t" style="left:948px;top:418px;width:60px;text-align:center">82.50</div>
<div style="left:618px;top:429px;width:410px;height:1px;background:#D4D0C8"></div>
<div class="t" style="left:621.5px;top:432px;letter-spacing:0.11px">2009-07-02 09:45:30.42</div>
<div class="t" style="left:768px;top:432px;width:60px;text-align:center">18.75</div>
<div class="t" style="left:828px;top:432px;width:60px;text-align:center">82.29</div>
<div class="t" style="left:888px;top:432px;width:60px;text-align:center">0.10</div>
<div class="t" style="left:948px;top:432px;width:60px;text-align:center">82.38</div>
<div style="left:618px;top:443px;width:410px;height:1px;background:#D4D0C8"></div>
<div class="t" style="left:621.5px;top:446px;letter-spacing:0.11px">2009-07-02 09:45:30.46</div>
<div class="t" style="left:768px;top:446px;width:60px;text-align:center">18.82</div>
<div class="t" style="left:828px;top:446px;width:60px;text-align:center">82.34</div>
<div class="t" style="left:888px;top:446px;width:60px;text-align:center">0.10</div>
<div class="t" style="left:948px;top:446px;width:60px;text-align:center">82.44</div>
<div style="left:618px;top:457px;width:410px;height:1px;background:#D4D0C8"></div>
<div class="t" style="left:621.5px;top:460px;letter-spacing:0.11px">2009-07-02 09:45:30.51</div>
<div class="t" style="left:768px;top:460px;width:60px;text-align:center">18.97</div>
<div class="t" style="left:828px;top:460px;width:60px;text-align:center">82.46</div>
<div class="t" style="left:888px;top:460px;width:60px;text-align:center">0.10</div>
<div class="t" style="left:948px;top:460px;width:60px;text-align:center">82.56</div>
<div style="left:618px;top:471px;width:410px;height:1px;background:#D4D0C8"></div>
<div class="t" style="left:621.5px;top:474px;letter-spacing:0.11px">2009-07-02 09:45:30.55</div>
<div class="t" style="left:768px;top:474px;width:60px;text-align:center">19.05</div>
<div class="t" style="left:828px;top:474px;width:60px;text-align:center">82.52</div>
<div class="t" style="left:888px;top:474px;width:60px;text-align:center">0.10</div>
<div class="t" style="left:948px;top:474px;width:60px;text-align:center">82.62</div>
<div style="left:618px;top:485px;width:410px;height:1px;background:#D4D0C8"></div>
<div class="t" style="left:621.5px;top:488px;letter-spacing:0.11px">2009-07-02 09:45:30.59</div>
<div class="t" style="left:768px;top:488px;width:60px;text-align:center">19.56</div>
<div class="t" style="left:828px;top:488px;width:60px;text-align:center">82.90</div>
<div class="t" style="left:888px;top:488px;width:60px;text-align:center">0.11</div>
<div class="t" style="left:948px;top:488px;width:60px;text-align:center">83.01</div>
<div style="left:618px;top:499px;width:410px;height:1px;background:#D4D0C8"></div>
<div class="t" style="left:621.5px;top:502px;letter-spacing:0.11px">2009-07-02 09:45:30.64</div>
<div class="t" style="left:768px;top:502px;width:60px;text-align:center">19.47</div>
<div class="t" style="left:828px;top:502px;width:60px;text-align:center">82.83</div>
<div class="t" style="left:888px;top:502px;width:60px;text-align:center">0.13</div>
<div class="t" style="left:948px;top:502px;width:60px;text-align:center">82.96</div>
<div style="left:618px;top:513px;width:410px;height:1px;background:#D4D0C8"></div>
<div class="t" style="left:621.5px;top:516px;letter-spacing:0.11px">2009-07-02 09:45:30.68</div>
<div class="t" style="left:768px;top:516px;width:60px;text-align:center">19.77</div>
<div class="t" style="left:828px;top:516px;width:60px;text-align:center">83.05</div>
<div class="t" style="left:888px;top:516px;width:60px;text-align:center">0.13</div>
<div class="t" style="left:948px;top:516px;width:60px;text-align:center">83.18</div>
<div style="left:618px;top:527px;width:410px;height:1px;background:#D4D0C8"></div>
<div class="t" style="left:621.5px;top:530px;letter-spacing:0.11px">2009-07-02 09:45:30.72</div>
<div class="t" style="left:768px;top:530px;width:60px;text-align:center">20.06</div>
<div class="t" style="left:828px;top:530px;width:60px;text-align:center">83.26</div>
<div class="t" style="left:888px;top:530px;width:60px;text-align:center">0.16</div>
<div class="t" style="left:948px;top:530px;width:60px;text-align:center">83.42</div>
<div style="left:618px;top:541px;width:410px;height:1px;background:#D4D0C8"></div>
<div class="t" style="left:621.5px;top:544px;letter-spacing:0.11px">2009-07-02 09:45:30.76</div>
<div class="t" style="left:768px;top:544px;width:60px;text-align:center">20.32</div>
<div class="t" style="left:828px;top:544px;width:60px;text-align:center">83.45</div>
<div class="t" style="left:888px;top:544px;width:60px;text-align:center">0.15</div>
<div class="t" style="left:948px;top:544px;width:60px;text-align:center">83.60</div>
<div style="left:618px;top:555px;width:410px;height:1px;background:#D4D0C8"></div>
<div class="t" style="left:621.5px;top:558px;letter-spacing:0.11px">2009-07-02 09:45:30.81</div>
<div class="t" style="left:768px;top:558px;width:60px;text-align:center">20.65</div>
<div class="t" style="left:828px;top:558px;width:60px;text-align:center">83.68</div>
<div class="t" style="left:888px;top:558px;width:60px;text-align:center">0.15</div>
<div class="t" style="left:948px;top:558px;width:60px;text-align:center">83.82</div>
<div style="left:618px;top:569px;width:410px;height:1px;background:#D4D0C8"></div>
<div class="t" style="left:621.5px;top:572px;letter-spacing:0.11px">2009-07-02 09:45:30.85</div>
<div class="t" style="left:768px;top:572px;width:60px;text-align:center">21.37</div>
<div class="t" style="left:828px;top:572px;width:60px;text-align:center">84.18</div>
<div class="t" style="left:888px;top:572px;width:60px;text-align:center">0.15</div>
<div class="t" style="left:948px;top:572px;width:60px;text-align:center">84.32</div>
<div style="left:618px;top:583px;width:410px;height:1px;background:#D4D0C8"></div>
<div class="t" style="left:621.5px;top:586px;letter-spacing:0.11px">2009-07-02 09:45:30.89</div>
<div class="t" style="left:768px;top:586px;width:60px;text-align:center">22.09</div>
<div class="t" style="left:828px;top:586px;width:60px;text-align:center">84.65</div>
<div class="t" style="left:888px;top:586px;width:60px;text-align:center">0.11</div>
<div class="t" style="left:948px;top:586px;width:60px;text-align:center">84.76</div>
<div style="left:618px;top:597px;width:410px;height:1px;background:#D4D0C8"></div>
<div class="t" style="left:621.5px;top:600px;letter-spacing:0.11px">2009-07-02 09:45:30.93</div>
<div class="t" style="left:768px;top:600px;width:60px;text-align:center">22.27</div>
<div class="t" style="left:828px;top:600px;width:60px;text-align:center">84.77</div>
<div class="t" style="left:888px;top:600px;width:60px;text-align:center">0.14</div>
<div class="t" style="left:948px;top:600px;width:60px;text-align:center">84.91</div>
<div style="left:618px;top:611px;width:410px;height:1px;background:#D4D0C8"></div>
<div class="t" style="left:621.5px;top:614px;letter-spacing:0.11px">2009-07-02 09:45:31. 0</div>
<div class="t" style="left:768px;top:614px;width:60px;text-align:center">22.15</div>
<div class="t" style="left:828px;top:614px;width:60px;text-align:center">84.70</div>
<div class="t" style="left:888px;top:614px;width:60px;text-align:center">0.13</div>
<div class="t" style="left:948px;top:614px;width:60px;text-align:center">84.82</div>
<div style="left:618px;top:625px;width:410px;height:1px;background:#D4D0C8"></div>
<div class="t" style="left:621.5px;top:628px;letter-spacing:0.11px">2009-07-02 09:45:31. 4</div>
<div class="t" style="left:768px;top:628px;width:60px;text-align:center">22.10</div>
<div class="t" style="left:828px;top:628px;width:60px;text-align:center">84.66</div>
<div class="t" style="left:888px;top:628px;width:60px;text-align:center">0.12</div>
<div class="t" style="left:948px;top:628px;width:60px;text-align:center">84.78</div>
<div style="left:618px;top:639px;width:410px;height:1px;background:#D4D0C8"></div>
<div class="t" style="left:621.5px;top:642px;letter-spacing:0.11px">2009-07-02 09:45:31. 8</div>
<div class="t" style="left:768px;top:642px;width:60px;text-align:center">21.94</div>
<div class="t" style="left:828px;top:642px;width:60px;text-align:center">84.55</div>
<div class="t" style="left:888px;top:642px;width:60px;text-align:center">0.12</div>
<div class="t" style="left:948px;top:642px;width:60px;text-align:center">84.68</div>
<div style="left:618px;top:653px;width:410px;height:1px;background:#D4D0C8"></div>
<div class="t" style="left:621.5px;top:656px;letter-spacing:0.11px">2009-07-02 09:45:31.12</div>
<div class="t" style="left:768px;top:656px;width:60px;text-align:center">22.00</div>
<div class="t" style="left:828px;top:656px;width:60px;text-align:center">84.59</div>
<div class="t" style="left:888px;top:656px;width:60px;text-align:center">0.11</div>
<div class="t" style="left:948px;top:656px;width:60px;text-align:center">84.71</div>
<div style="left:618px;top:667px;width:410px;height:1px;background:#D4D0C8"></div>
<div class="t" style="left:621.5px;top:670px;letter-spacing:0.11px">2009-07-02 09:45:31.17</div>
<div class="t" style="left:768px;top:670px;width:60px;text-align:center">22.53</div>
<div class="t" style="left:828px;top:670px;width:60px;text-align:center">84.94</div>
<div class="t" style="left:888px;top:670px;width:60px;text-align:center">0.10</div>
<div class="t" style="left:948px;top:670px;width:60px;text-align:center">85.04</div>
<div style="left:618px;top:681px;width:410px;height:1px;background:#D4D0C8"></div>
<div class="t" style="left:621.5px;top:684px;letter-spacing:0.11px">2009-07-02 09:45:31.21</div>
<div class="t" style="left:768px;top:684px;width:60px;text-align:center">22.62</div>
<div class="t" style="left:828px;top:684px;width:60px;text-align:center">85.00</div>
<div class="t" style="left:888px;top:684px;width:60px;text-align:center">0.11</div>
<div class="t" style="left:948px;top:684px;width:60px;text-align:center">85.11</div>
<div style="left:618px;top:695px;width:410px;height:1px;background:#D4D0C8"></div>
<div class="t" style="left:621.5px;top:698px;letter-spacing:0.11px">2009-07-02 09:45:31.25</div>
<div class="t" style="left:768px;top:698px;width:60px;text-align:center">23.40</div>
<div class="t" style="left:828px;top:698px;width:60px;text-align:center">85.49</div>
<div class="t" style="left:888px;top:698px;width:60px;text-align:center">0.13</div>
<div class="t" style="left:948px;top:698px;width:60px;text-align:center">85.61</div>
<div style="left:618px;top:709px;width:410px;height:1px;background:#D4D0C8"></div>
<div class="t" style="left:621.5px;top:712px;letter-spacing:0.11px">2009-07-02 09:45:31.29</div>
<div class="t" style="left:768px;top:712px;width:60px;text-align:center">23.68</div>
<div class="t" style="left:828px;top:712px;width:60px;text-align:center">85.66</div>
<div class="t" style="left:888px;top:712px;width:60px;text-align:center">0.12</div>
<div class="t" style="left:948px;top:712px;width:60px;text-align:center">85.78</div>
<div style="left:768px;top:92px;width:1px;height:630px;background:#D4D0C8"></div>
<div style="left:828px;top:92px;width:1px;height:630px;background:#D4D0C8"></div>
<div style="left:888px;top:92px;width:1px;height:630px;background:#D4D0C8"></div>
<div style="left:948px;top:92px;width:1px;height:630px;background:#D4D0C8"></div>
<div style="left:1008px;top:92px;width:1px;height:630px;background:#D4D0C8"></div>
<div style="left:1028px;top:75px;width:15px;height:647px;background-color:#E8E6E2;background-image:repeating-conic-gradient(#D4D0C8 0 25%,#fff 0 50%);background-size:2px 2px"></div>
<div style="left:1028px;top:75px;width:15px;height:16px;background:#D4D0C8;border-top:1px solid #fff;border-left:1px solid #fff;border-right:1px solid #404040;border-bottom:1px solid #404040;box-shadow:inset -1px -1px 0 #808080"></div>
<div style="left:1028px;top:91px;width:15px;height:78px;background:#D4D0C8;border-top:1px solid #fff;border-left:1px solid #fff;border-right:1px solid #404040;border-bottom:1px solid #404040;box-shadow:inset -1px -1px 0 #808080"></div>
<div style="left:1028px;top:706px;width:15px;height:16px;background:#D4D0C8;border-top:1px solid #fff;border-left:1px solid #fff;border-right:1px solid #404040;border-bottom:1px solid #404040;box-shadow:inset -1px -1px 0 #808080"></div>
<svg width="1050" height="747" style="z-index:2">
<path d="M1031 85 H1039 L1035 81 Z" fill="#000"/>
<path d="M1031 711 H1039 L1035 715 Z" fill="#000"/>
</svg>
<div style="left:934px;top:727px;width:29px;height:16px;border-top:1px solid #808080;border-left:1px solid #808080;border-right:1px solid #fff;border-bottom:1px solid #fff"></div>
<div style="left:965px;top:727px;width:31px;height:16px;border-top:1px solid #808080;border-left:1px solid #808080;border-right:1px solid #fff;border-bottom:1px solid #fff"></div>
<div style="left:998px;top:727px;width:30px;height:16px;border-top:1px solid #808080;border-left:1px solid #808080;border-right:1px solid #fff;border-bottom:1px solid #fff"></div>
<svg width="1050" height="747" style="z-index:2">
<path d="M1034 742 L1044 732 M1038 742 L1044 736 M1042 742 L1044 740" stroke="#808080" stroke-width="1.6" fill="none"/>
<path d="M1033 742 L1043 732 M1037 742 L1043 736 M1041 742 L1043 740" stroke="#fff" stroke-width="0.8" fill="none"/>
</svg>
<svg width="1050" height="747" style="z-index:5" shape-rendering="crispEdges"><defs><path id="g0" d="M1 4h8v1h-8zM7 5h2v1h-2zM10 5h2v1h-2zM7 6h4v1h-4zM7 7h3v1h-3zM7 8h3v1h-3zM7 9h5v1h-5zM7 10h2v1h-2zM10 10h2v1h-2zM7 11h2v1h-2zM8 12h4v1h-4zM8 13h4v1h-4zM9 14h3v1h-3z"/><path id="g1" d="M2 4h2v1h-2zM6 4h5v1h-5zM2 5h2v1h-2zM6 5h2v1h-2zM9 5h2v1h-2zM1 6h7v1h-7zM9 6h2v1h-2zM2 7h2v1h-2zM6 7h2v1h-2zM9 7h2v1h-2zM2 8h3v1h-3zM6 8h2v1h-2zM9 8h2v1h-2zM1 9h7v1h-7zM9 9h2v1h-2zM1 10h7v1h-7zM9 10h2v1h-2zM0 11h4v1h-4zM6 11h2v1h-2zM9 11h2v1h-2zM2 12h2v1h-2zM5 12h2v1h-2zM9 12h4v1h-4zM2 13h2v1h-2zM5 13h2v1h-2zM9 13h4v1h-4zM4 14h2v1h-2zM9 14h3v1h-3z"/><path id="g2" d="M6 3h5v1h-5zM1 4h6v1h-6zM9 4h2v1h-2zM1 5h4v1h-4zM6 5h5v1h-5zM1 6h4v1h-4zM1 7h11v1h-11zM1 8h11v1h-11zM1 9h11v1h-11zM1 10h4v1h-4zM7 10h2v1h-2zM1 11h11v1h-11zM1 12h2v1h-2zM6 12h4v1h-4zM4 13h8v1h-8zM7 14h2v1h-2z"/><path id="g3" d="M1 4h11v1h-11zM5 5h2v1h-2zM2 6h10v1h-10zM2 8h9v1h-9zM2 9h2v1h-2zM5 9h2v1h-2zM9 9h2v1h-2zM2 10h2v1h-2zM5 10h2v1h-2zM9 10h2v1h-2zM2 11h9v1h-9zM1 12h2v1h-2zM1 13h2v1h-2zM0 14h2v1h-2z"/><path id="g4" d="M4 3h2v1h-2zM3 4h2v1h-2zM8 4h2v1h-2zM3 5h2v1h-2zM8 5h2v1h-2zM2 6h2v1h-2zM9 6h2v1h-2zM1 7h3v1h-3zM10 7h2v1h-2zM1 8h11v1h-11zM4 9h2v1h-2zM9 9h2v1h-2zM4 10h2v1h-2zM9 10h2v1h-2zM4 11h2v1h-2zM9 11h2v1h-2zM3 12h2v1h-2zM8 12h2v1h-2zM2 13h3v1h-3zM8 13h2v1h-2zM1 14h2v1h-2zM6 14h4v1h-4z"/><path id="g5" d="M2 3h2v1h-2zM9 3h2v1h-2zM2 4h2v1h-2zM6 4h5v1h-5zM2 5h2v1h-2zM6 5h2v1h-2zM1 6h7v1h-7zM2 7h2v1h-2zM6 7h2v1h-2zM2 8h3v1h-3zM6 8h6v1h-6zM2 9h6v1h-6zM9 9h2v1h-2zM1 10h7v1h-7zM9 10h2v1h-2zM1 11h3v1h-3zM5 11h2v1h-2zM9 11h2v1h-2zM2 12h2v1h-2zM5 12h2v1h-2zM9 12h2v1h-2zM2 13h2v1h-2zM5 13h2v1h-2zM9 13h2v1h-2zM2 14h2v1h-2zM5 14h2v1h-2zM9 14h2v1h-2z"/><path id="g6" d="M5 3h2v1h-2zM1 4h11v1h-11zM2 5h9v1h-9zM2 6h2v1h-2zM5 6h2v1h-2zM9 6h2v1h-2zM2 7h9v1h-9zM5 8h2v1h-2zM2 9h9v1h-9zM1 10h11v1h-11zM5 11h2v1h-2zM9 11h2v1h-2zM2 12h9v1h-9zM5 13h2v1h-2zM9 13h2v1h-2zM4 14h3v1h-3z"/><path id="g7" d="M3 3h2v1h-2zM7 3h2v1h-2zM3 4h6v1h-6zM2 5h2v1h-2zM5 5h4v1h-4zM2 6h2v1h-2zM5 6h7v1h-7zM1 7h5v1h-5zM7 7h2v1h-2zM2 8h2v1h-2zM7 8h2v1h-2zM2 9h10v1h-10zM2 10h2v1h-2zM7 10h2v1h-2zM2 11h2v1h-2zM7 11h2v1h-2zM2 12h2v1h-2zM7 12h2v1h-2zM2 13h2v1h-2zM7 13h2v1h-2zM2 14h2v1h-2zM7 14h2v1h-2z"/><path id="g8" d="M6 2h2v1h-2zM10 2h2v1h-2zM2 3h2v1h-2zM6 3h2v1h-2zM9 3h2v1h-2zM5 4h7v1h-7zM7 5h2v1h-2zM0 6h4v1h-4zM7 6h2v1h-2zM2 7h2v1h-2zM5 7h7v1h-7zM2 8h2v1h-2zM7 8h2v1h-2zM2 9h2v1h-2zM7 9h2v1h-2zM2 10h10v1h-10zM2 11h4v1h-4zM7 11h2v1h-2zM2 12h3v1h-3zM7 12h2v1h-2z"/><path id="g9" d="M3 3h2v1h-2zM2 4h2v1h-2zM5 4h7v1h-7zM2 5h2v1h-2zM5 5h2v1h-2zM8 5h4v1h-4zM1 6h2v1h-2zM4 6h3v1h-3zM8 6h4v1h-4zM0 7h7v1h-7zM8 7h4v1h-4zM2 8h2v1h-2zM5 8h7v1h-7zM1 9h3v1h-3zM5 9h2v1h-2zM8 9h4v1h-4zM1 10h6v1h-6zM8 10h4v1h-4zM5 11h2v1h-2zM8 11h4v1h-4zM4 12h3v1h-3zM8 12h4v1h-4zM0 13h12v1h-12zM5 14h2v1h-2zM10 14h2v1h-2z"/><path id="g10" d="M3 3h2v1h-2zM7 3h2v1h-2zM2 4h2v1h-2zM7 4h2v1h-2zM2 5h10v1h-10zM2 6h2v1h-2zM1 7h3v1h-3zM5 7h6v1h-6zM0 8h4v1h-4zM2 9h2v1h-2zM5 9h6v1h-6zM2 10h2v1h-2zM2 11h10v1h-10zM2 12h4v1h-4zM10 12h2v1h-2zM2 13h4v1h-4zM10 13h2v1h-2zM2 14h10v1h-10z"/><path id="g11" d="M5 2h2v1h-2zM2 3h9v1h-9zM2 4h2v1h-2zM9 4h2v1h-2zM2 5h9v1h-9zM2 6h2v1h-2zM9 6h2v1h-2zM2 7h9v1h-9zM2 8h2v1h-2zM9 8h2v1h-2zM2 9h9v1h-9zM5 10h2v1h-2zM1 11h4v1h-4zM6 11h2v1h-2zM10 11h2v1h-2zM1 12h4v1h-4zM8 12h4v1h-4zM3 13h7v1h-7z"/><path id="g12" d="M5 2h1v1h-1zM6 3h1v1h-1zM1 4h10v1h-10zM3 5h1v1h-1zM8 5h1v1h-1zM3 6h1v1h-1zM8 6h1v1h-1zM4 7h1v1h-1zM7 7h2v1h-2zM4 8h1v1h-1zM7 8h1v1h-1zM5 9h2v1h-2zM5 10h2v1h-2zM4 11h1v1h-1zM7 11h1v1h-1zM2 12h2v1h-2zM8 12h2v1h-2zM1 13h1v1h-1zM10 13h1v1h-1z"/><path id="g13" d="M3 3h1v1h-1zM7 3h1v1h-1zM3 4h1v1h-1zM5 4h1v1h-1zM7 4h1v1h-1zM2 5h1v1h-1zM5 5h1v1h-1zM7 5h1v1h-1zM2 6h1v1h-1zM5 6h6v1h-6zM1 7h2v1h-2zM4 7h1v1h-1zM7 7h1v1h-1zM2 8h1v1h-1zM7 8h1v1h-1zM2 9h1v1h-1zM4 9h7v1h-7zM2 10h1v1h-1zM7 10h1v1h-1zM2 11h1v1h-1zM7 11h1v1h-1zM2 12h1v1h-1zM7 12h1v1h-1zM2 13h1v1h-1zM7 13h1v1h-1zM2 14h1v1h-1zM7 14h1v1h-1z"/><path id="g14" d="M5 4h1v1h-1zM1 5h10v1h-10zM4 6h2v1h-2zM7 6h1v1h-1zM3 7h1v1h-1zM5 7h1v1h-1zM8 7h1v1h-1zM1 8h2v1h-2zM9 8h2v1h-2zM3 9h6v1h-6zM3 10h6v1h-6zM3 11h1v1h-1zM8 11h1v1h-1zM3 12h6v1h-6zM1 14h10v1h-10z"/><path id="g15" d="M9 3h1v1h-1zM2 4h7v1h-7zM2 5h9v1h-9zM4 6h1v1h-1zM1 7h10v1h-10zM3 8h1v1h-1zM2 9h8v1h-8zM1 10h9v1h-9zM1 11h1v1h-1zM3 11h1v1h-1zM9 11h1v1h-1zM3 12h7v1h-7zM3 13h1v1h-1zM9 13h1v1h-1zM3 14h7v1h-7z"/><path id="g16" d="M4 3h1v1h-1zM3 4h1v1h-1zM8 4h1v1h-1zM3 5h1v1h-1zM8 5h1v1h-1zM2 6h1v1h-1zM9 6h1v1h-1zM1 7h2v1h-2zM10 7h1v1h-1zM1 8h10v1h-10zM4 9h1v1h-1zM9 9h1v1h-1zM4 10h1v1h-1zM9 10h1v1h-1zM4 11h1v1h-1zM9 11h1v1h-1zM3 12h1v1h-1zM8 12h1v1h-1zM2 13h2v1h-2zM8 13h1v1h-1zM1 14h1v1h-1zM6 14h3v1h-3z"/><path id="g17" d="M2 3h1v1h-1zM9 3h1v1h-1zM2 4h1v1h-1zM6 4h4v1h-4zM2 5h1v1h-1zM6 5h1v1h-1zM1 6h4v1h-4zM6 6h1v1h-1zM2 7h1v1h-1zM6 7h1v1h-1zM2 8h2v1h-2zM6 8h5v1h-5zM2 9h1v1h-1zM4 9h1v1h-1zM6 9h1v1h-1zM9 9h1v1h-1zM1 10h2v1h-2zM4 10h1v1h-1zM6 10h1v1h-1zM9 10h1v1h-1zM1 11h2v1h-2zM5 11h1v1h-1zM9 11h1v1h-1zM2 12h1v1h-1zM5 12h1v1h-1zM9 12h1v1h-1zM2 13h1v1h-1zM5 13h1v1h-1zM9 13h1v1h-1zM2 14h1v1h-1zM5 14h1v1h-1zM9 14h1v1h-1z"/><path id="g18" d="M5 3h1v1h-1zM1 4h10v1h-10zM1 5h1v1h-1zM4 5h1v1h-1zM7 5h1v1h-1zM10 5h1v1h-1zM3 6h1v1h-1zM8 6h2v1h-2zM1 7h2v1h-2zM5 7h1v1h-1zM10 7h1v1h-1zM2 8h8v1h-8zM2 9h1v1h-1zM4 9h4v1h-4zM9 9h1v1h-1zM2 10h2v1h-2zM7 10h1v1h-1zM9 10h1v1h-1zM2 11h1v1h-1zM5 11h2v1h-2zM9 11h1v1h-1zM2 12h1v1h-1zM5 12h1v1h-1zM7 12h1v1h-1zM9 12h1v1h-1zM2 13h1v1h-1zM4 13h1v1h-1zM9 13h1v1h-1zM2 14h8v1h-8z"/><path id="g19" d="M2 4h9v1h-9zM2 5h1v1h-1zM10 5h1v1h-1zM2 6h1v1h-1zM10 6h1v1h-1zM2 7h1v1h-1zM10 7h1v1h-1zM2 8h1v1h-1zM10 8h1v1h-1zM2 9h1v1h-1zM10 9h1v1h-1zM2 10h1v1h-1zM10 10h1v1h-1zM2 11h1v1h-1zM10 11h1v1h-1zM2 12h1v1h-1zM10 12h1v1h-1zM2 13h9v1h-9zM10 14h1v1h-1z"/><path id="g20" d="M3 3h1v1h-1zM7 3h4v1h-4zM1 4h5v1h-5zM7 4h1v1h-1zM10 4h1v1h-1zM3 5h1v1h-1zM7 5h1v1h-1zM9 5h1v1h-1zM1 6h5v1h-5zM7 6h1v1h-1zM9 6h1v1h-1zM1 7h5v1h-5zM7 7h1v1h-1zM10 7h1v1h-1zM3 8h1v1h-1zM7 8h1v1h-1zM10 8h1v1h-1zM2 9h1v1h-1zM7 9h1v1h-1zM9 9h1v1h-1zM1 10h1v1h-1zM5 10h1v1h-1zM2 11h8v1h-8zM2 12h1v1h-1zM5 12h1v1h-1zM9 12h1v1h-1zM2 13h1v1h-1zM5 13h1v1h-1zM8 13h2v1h-2zM5 14h1v1h-1z"/><path id="g21" d="M1 4h4v1h-4zM7 4h1v1h-1zM1 5h1v1h-1zM4 5h1v1h-1zM7 5h1v1h-1zM1 6h4v1h-4zM6 6h5v1h-5zM1 7h1v1h-1zM4 7h1v1h-1zM7 7h1v1h-1zM10 7h1v1h-1zM1 8h1v1h-1zM4 8h1v1h-1zM7 8h1v1h-1zM10 8h1v1h-1zM1 9h4v1h-4zM7 9h1v1h-1zM10 9h1v1h-1zM1 10h1v1h-1zM4 10h1v1h-1zM7 10h1v1h-1zM10 10h1v1h-1zM1 11h1v1h-1zM4 11h2v1h-2zM7 11h1v1h-1zM10 11h1v1h-1zM1 12h4v1h-4zM6 12h1v1h-1zM10 12h1v1h-1zM5 13h2v1h-2zM10 13h1v1h-1zM5 14h1v1h-1zM8 14h2v1h-2z"/><path id="g22" d="M5 2h2v1h-2zM6 3h2v1h-2zM1 4h11v1h-11zM3 5h2v1h-2zM8 5h2v1h-2zM3 6h2v1h-2zM8 6h2v1h-2zM4 7h2v1h-2zM7 7h3v1h-3zM4 8h2v1h-2zM7 8h2v1h-2zM5 9h3v1h-3zM5 10h3v1h-3zM4 11h2v1h-2zM7 11h2v1h-2zM2 12h3v1h-3zM8 12h3v1h-3zM1 13h2v1h-2zM10 13h2v1h-2z"/><path id="g23" d="M2 3h2v1h-2zM7 3h2v1h-2zM2 4h2v1h-2zM5 4h4v1h-4zM10 4h2v1h-2zM2 5h2v1h-2zM5 5h4v1h-4zM10 5h2v1h-2zM1 6h10v1h-10zM2 7h2v1h-2zM7 7h2v1h-2zM2 8h10v1h-10zM1 9h5v1h-5zM10 9h2v1h-2zM1 10h3v1h-3zM5 10h7v1h-7zM0 11h4v1h-4zM10 11h2v1h-2zM2 12h2v1h-2zM10 12h2v1h-2zM2 13h10v1h-10zM2 14h2v1h-2zM10 14h2v1h-2z"/><path id="g24" d="M1 2h4v1h-4zM7 2h1v1h-1zM1 3h1v1h-1zM4 3h1v1h-1zM7 3h4v1h-4zM1 4h1v1h-1zM4 4h1v1h-1zM6 4h1v1h-1zM9 4h1v1h-1zM1 5h1v1h-1zM4 5h4v1h-4zM9 5h1v1h-1zM1 6h5v1h-5zM7 6h2v1h-2zM3 7h1v1h-1zM7 7h3v1h-3zM1 8h1v1h-1zM3 8h2v1h-2zM6 8h1v1h-1zM9 8h2v1h-2zM1 9h1v1h-1zM3 9h1v1h-1zM5 9h6v1h-6zM1 10h1v1h-1zM3 10h1v1h-1zM6 10h1v1h-1zM10 10h1v1h-1zM1 11h1v1h-1zM3 11h2v1h-2zM6 11h1v1h-1zM10 11h1v1h-1zM0 12h3v1h-3zM6 12h1v1h-1zM10 12h1v1h-1zM6 13h5v1h-5z"/><path id="g25" d="M3 3h1v1h-1zM2 4h1v1h-1zM5 4h6v1h-6zM1 5h1v1h-1zM9 5h1v1h-1zM3 6h1v1h-1zM8 6h1v1h-1zM3 7h1v1h-1zM6 7h3v1h-3zM2 8h1v1h-1zM5 8h2v1h-2zM9 8h2v1h-2zM1 9h2v1h-2zM4 9h1v1h-1zM2 10h1v1h-1zM5 10h6v1h-6zM2 11h1v1h-1zM7 11h1v1h-1zM2 12h1v1h-1zM7 12h1v1h-1zM2 13h1v1h-1zM7 13h1v1h-1zM2 14h1v1h-1zM4 14h7v1h-7z"/><path id="g26" d="M2 4h1v1h-1zM6 4h4v1h-4zM2 5h1v1h-1zM6 5h1v1h-1zM9 5h1v1h-1zM1 6h4v1h-4zM6 6h1v1h-1zM9 6h1v1h-1zM2 7h1v1h-1zM6 7h1v1h-1zM9 7h1v1h-1zM2 8h2v1h-2zM6 8h1v1h-1zM9 8h1v1h-1zM1 9h2v1h-2zM4 9h1v1h-1zM6 9h1v1h-1zM9 9h1v1h-1zM1 10h2v1h-2zM4 10h1v1h-1zM6 10h1v1h-1zM9 10h1v1h-1zM0 11h1v1h-1zM2 11h1v1h-1zM6 11h1v1h-1zM9 11h1v1h-1zM2 12h1v1h-1zM5 12h1v1h-1zM9 12h1v1h-1zM11 12h1v1h-1zM2 13h1v1h-1zM5 13h1v1h-1zM9 13h1v1h-1zM11 13h1v1h-1zM4 14h1v1h-1zM9 14h2v1h-2z"/><path id="g27" d="M2 3h1v1h-1zM2 4h1v1h-1zM4 4h6v1h-6zM2 5h1v1h-1zM8 5h1v1h-1zM1 6h3v1h-3zM6 6h2v1h-2zM2 7h1v1h-1zM5 7h6v1h-6zM2 8h1v1h-1zM6 8h1v1h-1zM8 8h1v1h-1zM10 8h1v1h-1zM2 9h1v1h-1zM6 9h1v1h-1zM8 9h1v1h-1zM10 9h1v1h-1zM2 10h1v1h-1zM5 10h1v1h-1zM8 10h1v1h-1zM10 10h1v1h-1zM2 11h4v1h-4zM7 11h1v1h-1zM10 11h1v1h-1zM0 12h2v1h-2zM7 12h1v1h-1zM10 12h1v1h-1zM6 13h1v1h-1zM10 13h1v1h-1zM5 14h1v1h-1zM8 14h2v1h-2z"/><path id="g28" d="M1 3h1v1h-1zM10 3h1v1h-1zM2 4h1v1h-1zM4 4h4v1h-4zM10 4h1v1h-1zM3 5h1v1h-1zM7 5h2v1h-2zM10 5h1v1h-1zM3 6h1v1h-1zM5 6h1v1h-1zM7 6h2v1h-2zM10 6h1v1h-1zM0 7h2v1h-2zM3 7h1v1h-1zM5 7h1v1h-1zM7 7h2v1h-2zM10 7h1v1h-1zM2 8h2v1h-2zM5 8h1v1h-1zM7 8h2v1h-2zM10 8h1v1h-1zM3 9h1v1h-1zM5 9h1v1h-1zM7 9h2v1h-2zM10 9h1v1h-1zM2 10h2v1h-2zM5 10h1v1h-1zM7 10h2v1h-2zM10 10h1v1h-1zM2 11h2v1h-2zM5 11h1v1h-1zM7 11h2v1h-2zM10 11h1v1h-1zM1 12h1v1h-1zM5 12h1v1h-1zM10 12h1v1h-1zM1 13h1v1h-1zM4 13h1v1h-1zM6 13h1v1h-1zM10 13h1v1h-1zM1 14h1v1h-1zM3 14h1v1h-1zM7 14h1v1h-1zM9 14h2v1h-2z"/><path id="g29" d="M5 3h1v1h-1zM5 4h6v1h-6zM5 5h1v1h-1zM5 6h1v1h-1zM2 7h8v1h-8zM2 8h1v1h-1zM9 8h1v1h-1zM2 9h1v1h-1zM9 9h1v1h-1zM2 10h8v1h-8zM2 12h1v1h-1zM4 12h1v1h-1zM7 12h1v1h-1zM9 12h1v1h-1zM1 13h1v1h-1zM4 13h1v1h-1zM7 13h1v1h-1zM10 13h1v1h-1zM1 14h1v1h-1zM4 14h1v1h-1zM7 14h1v1h-1zM10 14h1v1h-1z"/><path id="g30" d="M4 2h2v1h-2zM4 3h6v1h-6zM2 4h2v1h-2zM8 4h2v1h-2zM1 5h2v1h-2zM8 5h1v1h-1zM4 6h1v1h-1zM6 6h2v1h-2zM5 7h2v1h-2zM2 8h8v1h-8zM1 9h1v1h-1zM3 9h1v1h-1zM9 9h1v1h-1zM3 10h1v1h-1zM9 10h1v1h-1zM3 11h1v1h-1zM9 11h1v1h-1zM3 12h7v1h-7zM3 13h1v1h-1zM9 13h1v1h-1z"/><path id="g31" d="M4 3h1v1h-1zM6 3h1v1h-1zM1 4h3v1h-3zM6 4h1v1h-1zM2 5h1v1h-1zM6 5h5v1h-5zM2 6h1v1h-1zM5 6h1v1h-1zM8 6h1v1h-1zM10 6h1v1h-1zM1 7h5v1h-5zM8 7h1v1h-1zM10 7h1v1h-1zM2 8h2v1h-2zM6 8h1v1h-1zM8 8h2v1h-2zM2 9h2v1h-2zM6 9h1v1h-1zM8 9h1v1h-1zM10 9h1v1h-1zM1 10h2v1h-2zM4 10h2v1h-2zM8 10h1v1h-1zM10 10h1v1h-1zM1 11h2v1h-2zM5 11h1v1h-1zM8 11h1v1h-1zM10 11h1v1h-1zM2 12h1v1h-1zM5 12h1v1h-1zM8 12h1v1h-1zM2 13h1v1h-1zM8 13h1v1h-1zM2 14h1v1h-1zM7 14h2v1h-2z"/><path id="g32" d="M2 3h1v1h-1zM9 3h2v1h-2zM2 4h1v1h-1zM5 4h4v1h-4zM2 5h1v1h-1zM5 5h1v1h-1zM1 6h3v1h-3zM5 6h1v1h-1zM8 6h1v1h-1zM2 7h1v1h-1zM5 7h1v1h-1zM8 7h1v1h-1zM2 8h2v1h-2zM5 8h6v1h-6zM1 9h3v1h-3zM8 9h1v1h-1zM1 10h2v1h-2zM8 10h2v1h-2zM0 11h1v1h-1zM2 11h1v1h-1zM5 11h1v1h-1zM8 11h1v1h-1zM10 11h1v1h-1zM2 12h1v1h-1zM5 12h1v1h-1zM8 12h1v1h-1zM10 12h1v1h-1zM2 13h1v1h-1zM4 13h1v1h-1zM8 13h1v1h-1zM10 13h1v1h-1zM2 14h1v1h-1zM6 14h2v1h-2z"/><path id="g33" d="M2 2h1v1h-1zM8 2h1v1h-1zM3 3h1v1h-1zM8 3h1v1h-1zM1 4h4v1h-4zM8 4h1v1h-1zM4 5h1v1h-1zM8 5h1v1h-1zM3 6h1v1h-1zM5 6h6v1h-6zM2 7h2v1h-2zM8 7h1v1h-1zM1 8h4v1h-4zM8 8h1v1h-1zM2 9h1v1h-1zM4 9h1v1h-1zM8 9h1v1h-1zM2 10h1v1h-1zM8 10h1v1h-1zM2 11h1v1h-1zM8 11h1v1h-1zM2 12h1v1h-1zM5 12h7v1h-7zM2 13h1v1h-1z"/><path id="g34" d="M1 4h10v1h-10zM3 5h1v1h-1zM8 5h1v1h-1zM3 6h1v1h-1zM8 6h1v1h-1zM3 7h1v1h-1zM8 7h1v1h-1zM1 8h10v1h-10zM3 9h1v1h-1zM8 9h1v1h-1zM3 10h1v1h-1zM8 10h1v1h-1zM3 11h1v1h-1zM8 11h1v1h-1zM2 12h2v1h-2zM8 12h1v1h-1zM2 13h1v1h-1zM8 13h1v1h-1zM1 14h1v1h-1zM8 14h1v1h-1z"/><path id="g35" d="M2 3h1v1h-1zM7 3h1v1h-1zM2 4h1v1h-1zM7 4h1v1h-1zM2 5h1v1h-1zM7 5h1v1h-1zM9 5h1v1h-1zM1 6h4v1h-4zM6 6h1v1h-1zM9 6h1v1h-1zM1 7h1v1h-1zM4 7h2v1h-2zM10 7h1v1h-1zM1 8h1v1h-1zM3 8h1v1h-1zM5 8h6v1h-6zM1 9h1v1h-1zM3 9h1v1h-1zM1 10h1v1h-1zM3 10h1v1h-1zM6 10h5v1h-5zM2 11h2v1h-2zM5 11h1v1h-1zM10 11h1v1h-1zM2 12h1v1h-1zM4 12h2v1h-2zM10 12h1v1h-1zM1 13h1v1h-1zM6 13h5v1h-5zM10 14h1v1h-1z"/><path id="g36" d="M2 4h8v1h-8zM2 5h1v1h-1zM9 5h1v1h-1zM2 6h1v1h-1zM9 6h1v1h-1zM2 7h1v1h-1zM9 7h1v1h-1zM2 8h8v1h-8zM2 9h1v1h-1zM9 9h1v1h-1zM2 10h1v1h-1zM9 10h1v1h-1zM2 11h1v1h-1zM9 11h1v1h-1zM2 12h1v1h-1zM9 12h1v1h-1zM2 13h8v1h-8zM2 14h1v1h-1zM9 14h1v1h-1z"/><path id="g37" d="M1 3h1v1h-1zM4 3h1v1h-1zM1 4h1v1h-1zM4 4h1v1h-1zM7 4h4v1h-4zM1 5h5v1h-5zM7 5h1v1h-1zM10 5h1v1h-1zM1 6h1v1h-1zM4 6h1v1h-1zM7 6h1v1h-1zM10 6h1v1h-1zM2 7h3v1h-3zM7 7h4v1h-4zM1 8h1v1h-1zM4 8h1v1h-1zM7 8h1v1h-1zM10 8h1v1h-1zM2 9h3v1h-3zM7 9h1v1h-1zM10 9h1v1h-1zM1 10h1v1h-1zM4 10h1v1h-1zM7 10h4v1h-4zM0 11h6v1h-6zM7 11h1v1h-1zM10 11h1v1h-1zM2 12h1v1h-1zM4 12h1v1h-1zM6 12h1v1h-1zM10 12h1v1h-1zM1 13h1v1h-1zM5 13h2v1h-2zM10 13h1v1h-1zM1 14h1v1h-1zM6 14h1v1h-1zM9 14h2v1h-2z"/><path id="g38" d="M9 3h1v1h-1zM1 4h4v1h-4zM9 4h1v1h-1zM1 5h1v1h-1zM4 5h1v1h-1zM9 5h1v1h-1zM1 6h1v1h-1zM4 6h8v1h-8zM1 7h1v1h-1zM4 7h1v1h-1zM9 7h1v1h-1zM1 8h4v1h-4zM6 8h1v1h-1zM9 8h1v1h-1zM1 9h1v1h-1zM4 9h1v1h-1zM6 9h1v1h-1zM9 9h1v1h-1zM1 10h1v1h-1zM4 10h1v1h-1zM7 10h1v1h-1zM9 10h1v1h-1zM1 11h1v1h-1zM4 11h1v1h-1zM9 11h1v1h-1zM1 12h4v1h-4zM9 12h1v1h-1zM1 13h1v1h-1zM9 13h1v1h-1zM7 14h3v1h-3z"/><path id="g39" d="M2 4h1v1h-1zM4 4h7v1h-7zM10 5h1v1h-1zM1 6h1v1h-1zM10 6h1v1h-1zM1 7h1v1h-1zM4 7h4v1h-4zM10 7h1v1h-1zM1 8h1v1h-1zM4 8h1v1h-1zM7 8h1v1h-1zM10 8h1v1h-1zM1 9h1v1h-1zM4 9h4v1h-4zM10 9h1v1h-1zM1 10h1v1h-1zM4 10h1v1h-1zM7 10h1v1h-1zM10 10h1v1h-1zM1 11h1v1h-1zM4 11h1v1h-1zM7 11h1v1h-1zM10 11h1v1h-1zM1 12h1v1h-1zM4 12h4v1h-4zM10 12h1v1h-1zM1 13h1v1h-1zM10 13h1v1h-1zM1 14h1v1h-1zM9 14h2v1h-2z"/><path id="g40" d="M2 3h8v1h-8zM2 4h1v1h-1zM9 4h1v1h-1zM2 5h8v1h-8zM2 6h8v1h-8zM1 7h10v1h-10zM2 8h8v1h-8zM2 9h1v1h-1zM5 9h1v1h-1zM9 9h1v1h-1zM2 10h8v1h-8zM2 11h8v1h-8zM2 12h8v1h-8zM5 13h1v1h-1zM1 14h10v1h-10z"/><path id="g41" d="M5 2h1v1h-1zM6 3h1v1h-1zM1 4h10v1h-10zM4 5h1v1h-1zM4 6h1v1h-1zM4 7h6v1h-6zM4 8h1v1h-1zM9 8h1v1h-1zM3 9h1v1h-1zM9 9h1v1h-1zM3 10h1v1h-1zM9 10h1v1h-1zM3 11h1v1h-1zM9 11h1v1h-1zM2 12h1v1h-1zM8 12h1v1h-1zM1 13h1v1h-1zM6 13h3v1h-3z"/><path id="g42" d="M7 3h1v1h-1zM9 3h1v1h-1zM7 4h1v1h-1zM10 4h1v1h-1zM1 5h10v1h-10zM7 6h1v1h-1zM7 7h1v1h-1zM1 8h5v1h-5zM7 8h1v1h-1zM3 9h1v1h-1zM7 9h1v1h-1zM3 10h1v1h-1zM7 10h1v1h-1zM3 11h1v1h-1zM8 11h1v1h-1zM3 12h1v1h-1zM5 12h2v1h-2zM8 12h1v1h-1zM11 12h1v1h-1zM1 13h4v1h-4zM8 13h1v1h-1zM10 13h1v1h-1zM9 14h2v1h-2z"/><path id="g43" d="M2 4h1v1h-1zM5 4h6v1h-6zM2 5h1v1h-1zM9 5h1v1h-1zM1 6h1v1h-1zM4 6h1v1h-1zM8 6h1v1h-1zM1 7h1v1h-1zM3 7h1v1h-1zM7 7h3v1h-3zM1 8h3v1h-3zM5 8h2v1h-2zM9 8h2v1h-2zM2 9h1v1h-1zM1 10h10v1h-10zM1 11h1v1h-1zM7 11h1v1h-1zM7 12h1v1h-1zM0 13h4v1h-4zM7 13h1v1h-1zM4 14h8v1h-8z"/><path id="g44" d="M1 4h10v1h-10zM1 5h1v1h-1zM6 5h1v1h-1zM1 6h1v1h-1zM6 6h1v1h-1zM1 7h1v1h-1zM3 7h8v1h-8zM1 8h1v1h-1zM6 8h1v1h-1zM10 8h1v1h-1zM1 9h1v1h-1zM6 9h1v1h-1zM10 9h1v1h-1zM1 10h1v1h-1zM5 10h1v1h-1zM10 10h1v1h-1zM1 11h1v1h-1zM5 11h1v1h-1zM9 11h1v1h-1zM1 12h1v1h-1zM5 12h1v1h-1zM9 12h1v1h-1zM1 13h1v1h-1zM4 13h1v1h-1zM9 13h1v1h-1zM0 14h1v1h-1zM3 14h1v1h-1zM7 14h3v1h-3z"/><path id="g45" d="M8 3h2v1h-2zM1 4h7v1h-7zM2 5h1v1h-1zM5 5h1v1h-1zM9 5h1v1h-1zM2 6h1v1h-1zM5 6h1v1h-1zM9 6h1v1h-1zM3 7h1v1h-1zM8 7h1v1h-1zM5 8h1v1h-1zM8 8h1v1h-1zM1 9h10v1h-10zM4 10h4v1h-4zM3 11h3v1h-3zM7 11h1v1h-1zM2 12h2v1h-2zM5 12h1v1h-1zM8 12h2v1h-2zM1 13h2v1h-2zM5 13h1v1h-1zM9 13h2v1h-2zM5 14h1v1h-1z"/><path id="g46" d="M2 2h1v1h-1zM5 2h1v1h-1zM10 2h1v1h-1zM2 3h1v1h-1zM6 3h1v1h-1zM9 3h1v1h-1zM1 4h3v1h-3zM5 4h6v1h-6zM2 5h1v1h-1zM7 5h1v1h-1zM2 6h2v1h-2zM7 6h1v1h-1zM2 7h2v1h-2zM5 7h6v1h-6zM1 8h3v1h-3zM7 8h1v1h-1zM1 9h2v1h-2zM7 9h1v1h-1zM0 10h1v1h-1zM2 10h1v1h-1zM4 10h7v1h-7zM2 11h1v1h-1zM7 11h1v1h-1zM2 12h1v1h-1zM7 12h1v1h-1zM2 13h1v1h-1zM7 13h1v1h-1z"/><path id="g47" d="M3 3h1v1h-1zM1 4h1v1h-1zM3 4h1v1h-1zM6 4h5v1h-5zM1 5h1v1h-1zM3 5h3v1h-3zM8 5h1v1h-1zM1 6h1v1h-1zM3 6h1v1h-1zM7 6h4v1h-4zM0 7h7v1h-7zM8 7h1v1h-1zM10 7h1v1h-1zM3 8h1v1h-1zM6 8h1v1h-1zM8 8h1v1h-1zM10 8h1v1h-1zM1 9h1v1h-1zM3 9h1v1h-1zM5 9h2v1h-2zM8 9h1v1h-1zM10 9h1v1h-1zM1 10h1v1h-1zM3 10h2v1h-2zM6 10h1v1h-1zM8 10h1v1h-1zM10 10h1v1h-1zM3 11h2v1h-2zM6 11h1v1h-1zM8 11h1v1h-1zM10 11h1v1h-1zM3 12h1v1h-1zM8 12h2v1h-2zM2 13h2v1h-2zM7 13h1v1h-1zM10 13h1v1h-1zM1 14h1v1h-1zM5 14h2v1h-2zM11 14h1v1h-1z"/><path id="g48" d="M5 2h1v1h-1zM1 3h10v1h-10zM5 4h1v1h-1zM1 5h2v1h-2zM4 5h1v1h-1zM7 5h1v1h-1zM9 5h2v1h-2zM2 6h1v1h-1zM4 6h3v1h-3zM8 6h2v1h-2zM3 7h1v1h-1zM5 7h1v1h-1zM7 7h1v1h-1zM1 8h2v1h-2zM4 8h4v1h-4zM9 8h2v1h-2zM1 10h10v1h-10zM5 11h1v1h-1zM5 12h1v1h-1z"/><path id="g49" d="M1 3h3v1h-3zM6 3h5v1h-5zM2 4h3v1h-3zM6 4h2v1h-2zM9 4h2v1h-2zM6 5h2v1h-2zM9 5h2v1h-2zM5 6h2v1h-2zM9 6h2v1h-2zM1 7h6v1h-6zM9 7h3v1h-3zM2 8h2v1h-2zM2 9h2v1h-2zM5 9h7v1h-7zM2 10h2v1h-2zM5 10h2v1h-2zM9 10h2v1h-2zM2 11h2v1h-2zM6 11h2v1h-2zM9 11h2v1h-2zM2 12h4v1h-4zM7 12h3v1h-3zM2 13h3v1h-3zM6 13h5v1h-5zM4 14h3v1h-3zM9 14h3v1h-3z"/><path id="g50" d="M1 3h11v1h-11zM1 4h2v1h-2zM4 4h2v1h-2zM7 4h2v1h-2zM10 4h2v1h-2zM1 5h11v1h-11zM5 6h2v1h-2zM1 7h11v1h-11zM2 8h9v1h-9zM2 9h2v1h-2zM9 9h2v1h-2zM2 10h9v1h-9zM2 11h9v1h-9zM2 12h9v1h-9zM2 13h2v1h-2zM9 13h2v1h-2zM1 14h11v1h-11z"/><path id="g51" d="M3 3h1v1h-1zM9 3h1v1h-1zM3 4h1v1h-1zM8 4h1v1h-1zM3 5h1v1h-1zM7 5h1v1h-1zM3 6h1v1h-1zM5 6h2v1h-2zM3 7h1v1h-1zM1 8h10v1h-10zM3 9h1v1h-1zM6 9h1v1h-1zM3 10h1v1h-1zM6 10h1v1h-1zM3 11h1v1h-1zM7 11h1v1h-1zM3 12h1v1h-1zM8 12h1v1h-1zM3 13h4v1h-4zM9 13h2v1h-2zM3 14h1v1h-1z"/><path id="g52" d="M6 2h1v1h-1zM1 3h10v1h-10zM1 4h1v1h-1zM8 4h1v1h-1zM1 5h1v1h-1zM4 5h1v1h-1zM8 5h1v1h-1zM1 6h1v1h-1zM3 6h8v1h-8zM1 7h1v1h-1zM4 7h1v1h-1zM8 7h1v1h-1zM1 8h1v1h-1zM5 8h4v1h-4zM1 9h1v1h-1zM3 9h7v1h-7zM1 10h1v1h-1zM4 10h1v1h-1zM9 10h1v1h-1zM1 11h1v1h-1zM5 11h4v1h-4zM1 12h1v1h-1zM5 12h4v1h-4zM0 13h1v1h-1zM3 13h2v1h-2zM9 13h2v1h-2z"/><path id="g53" d="M2 3h8v1h-8zM2 4h1v1h-1zM9 4h1v1h-1zM2 5h8v1h-8zM2 6h8v1h-8zM1 8h10v1h-10zM2 9h1v1h-1zM5 9h1v1h-1zM2 10h9v1h-9zM2 11h4v1h-4zM7 11h1v1h-1zM9 11h1v1h-1zM2 12h1v1h-1zM5 12h1v1h-1zM7 12h1v1h-1zM9 12h1v1h-1zM1 13h5v1h-5zM8 13h2v1h-2zM5 14h3v1h-3zM10 14h1v1h-1z"/><path id="g54" d="M6 3h1v1h-1zM6 4h1v1h-1zM6 5h1v1h-1zM2 6h1v1h-1zM6 6h1v1h-1zM2 7h1v1h-1zM6 7h1v1h-1zM9 7h1v1h-1zM2 8h1v1h-1zM6 8h1v1h-1zM9 8h1v1h-1zM2 9h1v1h-1zM6 9h1v1h-1zM10 9h1v1h-1zM1 10h1v1h-1zM6 10h1v1h-1zM10 10h1v1h-1zM0 11h2v1h-2zM6 11h1v1h-1zM11 11h1v1h-1zM6 12h1v1h-1zM6 13h1v1h-1zM3 14h3v1h-3z"/><path id="g55" d="M2 2h1v1h-1zM4 2h7v1h-7zM3 3h1v1h-1zM10 3h1v1h-1zM3 4h1v1h-1zM6 4h2v1h-2zM10 4h1v1h-1zM1 5h1v1h-1zM6 5h1v1h-1zM8 5h1v1h-1zM10 5h1v1h-1zM1 6h1v1h-1zM3 6h6v1h-6zM10 6h1v1h-1zM1 7h1v1h-1zM3 7h4v1h-4zM8 7h1v1h-1zM10 7h1v1h-1zM1 8h1v1h-1zM3 8h1v1h-1zM5 8h2v1h-2zM8 8h1v1h-1zM10 8h1v1h-1zM1 9h1v1h-1zM3 9h5v1h-5zM10 9h1v1h-1zM1 10h1v1h-1zM7 10h1v1h-1zM10 10h1v1h-1zM1 11h1v1h-1zM3 11h5v1h-5zM9 11h2v1h-2zM1 12h1v1h-1zM5 12h1v1h-1zM8 12h1v1h-1zM10 12h1v1h-1zM1 13h1v1h-1zM8 13h3v1h-3z"/><path id="g56" d="M3 2h1v1h-1zM7 2h1v1h-1zM2 3h1v1h-1zM4 3h7v1h-7zM2 4h1v1h-1zM7 4h1v1h-1zM2 5h1v1h-1zM5 5h5v1h-5zM1 6h2v1h-2zM4 6h1v1h-1zM9 6h1v1h-1zM0 7h1v1h-1zM2 7h1v1h-1zM5 7h5v1h-5zM2 8h1v1h-1zM4 8h1v1h-1zM9 8h1v1h-1zM2 9h1v1h-1zM5 9h5v1h-5zM2 10h1v1h-1zM4 10h1v1h-1zM9 10h1v1h-1zM2 11h1v1h-1zM5 11h5v1h-5zM2 12h1v1h-1zM4 12h1v1h-1zM9 12h1v1h-1zM2 13h9v1h-9z"/><path id="g57" d="M5 2h1v1h-1zM5 3h1v1h-1zM2 4h8v1h-8zM2 5h1v1h-1zM9 5h1v1h-1zM2 6h1v1h-1zM9 6h1v1h-1zM2 7h1v1h-1zM9 7h1v1h-1zM2 8h8v1h-8zM2 9h1v1h-1zM9 9h1v1h-1zM2 10h1v1h-1zM9 10h1v1h-1zM2 11h1v1h-1zM9 11h1v1h-1zM2 12h8v1h-8zM2 13h1v1h-1zM9 13h1v1h-1z"/><path id="g58" d="M1 4h10v1h-10zM5 5h1v1h-1zM5 6h1v1h-1zM5 7h1v1h-1zM1 8h10v1h-10zM5 9h2v1h-2zM5 10h2v1h-2zM4 11h1v1h-1zM7 11h1v1h-1zM3 12h2v1h-2zM8 12h1v1h-1zM2 13h2v1h-2zM8 13h2v1h-2zM1 14h1v1h-1zM10 14h1v1h-1z"/><path id="g59" d="M3 2h1v1h-1zM7 2h1v1h-1zM3 3h8v1h-8zM2 4h1v1h-1zM5 4h1v1h-1zM9 4h1v1h-1zM2 5h1v1h-1zM6 5h1v1h-1zM9 5h1v1h-1zM1 6h2v1h-2zM4 6h7v1h-7zM0 7h3v1h-3zM4 7h1v1h-1zM7 7h1v1h-1zM10 7h1v1h-1zM2 8h1v1h-1zM4 8h7v1h-7zM2 9h1v1h-1zM6 9h1v1h-1zM2 10h1v1h-1zM6 10h4v1h-4zM2 11h1v1h-1zM5 11h1v1h-1zM9 11h1v1h-1zM2 12h1v1h-1zM5 12h1v1h-1zM9 12h1v1h-1zM2 13h1v1h-1zM4 13h1v1h-1zM8 13h2v1h-2z"/><path id="g60" d="M6 3h1v1h-1zM1 4h3v1h-3zM6 4h4v1h-4zM1 5h1v1h-1zM3 5h1v1h-1zM5 5h1v1h-1zM8 5h1v1h-1zM1 6h1v1h-1zM3 6h8v1h-8zM1 7h1v1h-1zM3 7h1v1h-1zM5 7h1v1h-1zM7 7h1v1h-1zM10 7h1v1h-1zM1 8h3v1h-3zM5 8h1v1h-1zM7 8h1v1h-1zM10 8h1v1h-1zM1 9h1v1h-1zM3 9h1v1h-1zM5 9h6v1h-6zM1 10h1v1h-1zM3 10h1v1h-1zM7 10h2v1h-2zM1 11h1v1h-1zM3 11h1v1h-1zM7 11h2v1h-2zM1 12h3v1h-3zM6 12h1v1h-1zM8 12h1v1h-1zM1 13h1v1h-1zM5 13h1v1h-1zM8 13h1v1h-1zM11 13h1v1h-1zM3 14h2v1h-2zM8 14h3v1h-3z"/><path id="g61" d="M5 2h1v1h-1zM1 3h10v1h-10zM3 4h1v1h-1zM7 4h1v1h-1zM3 5h1v1h-1zM6 5h1v1h-1zM2 6h1v1h-1zM6 6h5v1h-5zM2 7h1v1h-1zM5 7h1v1h-1zM7 7h1v1h-1zM10 7h1v1h-1zM1 8h2v1h-2zM4 8h2v1h-2zM7 8h3v1h-3zM2 9h1v1h-1zM4 9h1v1h-1zM6 9h1v1h-1zM9 9h1v1h-1zM2 10h1v1h-1zM6 10h3v1h-3zM2 11h1v1h-1zM7 11h2v1h-2zM2 12h1v1h-1zM5 12h2v1h-2zM8 12h2v1h-2zM2 13h1v1h-1zM4 13h1v1h-1zM10 13h1v1h-1z"/><path id="g62" d="M2 2h2v1h-2zM5 2h7v1h-7zM2 3h2v1h-2zM5 3h2v1h-2zM10 3h2v1h-2zM1 4h6v1h-6zM8 4h4v1h-4zM3 5h4v1h-4zM8 5h4v1h-4zM3 6h4v1h-4zM8 6h4v1h-4zM2 7h2v1h-2zM5 7h4v1h-4zM10 7h2v1h-2zM1 8h8v1h-8zM10 8h2v1h-2zM1 9h5v1h-5zM7 9h3v1h-3zM2 10h2v1h-2zM7 10h3v1h-3zM2 11h2v1h-2zM6 11h4v1h-4zM11 11h2v1h-2zM2 12h2v1h-2zM5 12h7v1h-7zM2 13h2v1h-2zM8 13h4v1h-4z"/><path id="g63" d="M1 4h11v1h-11zM1 5h2v1h-2zM5 5h2v1h-2zM10 5h2v1h-2zM1 6h2v1h-2zM4 6h8v1h-8zM1 7h5v1h-5zM7 7h2v1h-2zM10 7h2v1h-2zM1 8h2v1h-2zM5 8h3v1h-3zM10 8h2v1h-2zM1 9h5v1h-5zM7 9h5v1h-5zM1 10h2v1h-2zM5 10h4v1h-4zM10 10h2v1h-2zM1 11h6v1h-6zM10 11h2v1h-2zM1 12h2v1h-2zM6 12h3v1h-3zM10 12h2v1h-2zM1 13h11v1h-11zM1 14h2v1h-2zM10 14h2v1h-2z"/><path id="g64" d="M2 3h10v1h-10zM2 4h2v1h-2zM10 4h2v1h-2zM2 5h10v1h-10zM2 6h2v1h-2zM9 6h2v1h-2zM2 7h9v1h-9zM2 8h9v1h-9zM1 9h4v1h-4zM6 9h2v1h-2zM9 9h2v1h-2zM1 10h10v1h-10zM1 11h11v1h-11zM1 12h4v1h-4zM6 12h6v1h-6zM1 13h11v1h-11zM0 14h2v1h-2zM3 14h2v1h-2zM9 14h3v1h-3z"/><path id="g65" d="M2 3h2v1h-2zM7 3h2v1h-2zM2 4h2v1h-2zM5 4h4v1h-4zM2 5h7v1h-7zM1 6h11v1h-11zM0 7h6v1h-6zM7 7h2v1h-2zM0 8h4v1h-4zM7 8h2v1h-2zM2 9h2v1h-2zM5 9h7v1h-7zM2 10h2v1h-2zM7 10h2v1h-2zM2 11h2v1h-2zM7 11h2v1h-2zM2 12h2v1h-2zM7 12h2v1h-2zM2 13h2v1h-2zM7 13h2v1h-2zM2 14h10v1h-10z"/><path id="g66" d="M1 4h10v1h-10zM5 5h1v1h-1zM2 6h8v1h-8zM2 7h1v1h-1zM9 7h1v1h-1zM2 8h1v1h-1zM5 8h1v1h-1zM9 8h1v1h-1zM2 9h1v1h-1zM5 9h1v1h-1zM9 9h1v1h-1zM2 10h1v1h-1zM5 10h1v1h-1zM9 10h1v1h-1zM2 11h1v1h-1zM5 11h1v1h-1zM9 11h1v1h-1zM5 12h1v1h-1zM7 12h1v1h-1zM3 13h2v1h-2zM8 13h2v1h-2zM1 14h2v1h-2zM10 14h1v1h-1z"/><path id="g67" d="M1 4h10v1h-10zM5 5h1v1h-1zM1 6h10v1h-10zM1 7h1v1h-1zM4 7h1v1h-1zM7 7h1v1h-1zM10 7h1v1h-1zM1 8h1v1h-1zM4 8h1v1h-1zM7 8h1v1h-1zM10 8h1v1h-1zM1 9h1v1h-1zM4 9h4v1h-4zM10 9h1v1h-1zM1 10h1v1h-1zM4 10h1v1h-1zM7 10h1v1h-1zM10 10h1v1h-1zM1 11h1v1h-1zM4 11h4v1h-4zM10 11h1v1h-1zM1 12h1v1h-1zM4 12h1v1h-1zM7 12h1v1h-1zM10 12h1v1h-1zM1 13h10v1h-10zM1 14h1v1h-1zM10 14h1v1h-1z"/><path id="g68" d="M6 2h1v1h-1zM1 3h10v1h-10zM1 4h1v1h-1zM1 5h1v1h-1zM4 5h6v1h-6zM1 6h1v1h-1zM3 6h1v1h-1zM7 6h1v1h-1zM1 7h1v1h-1zM3 7h1v1h-1zM7 7h1v1h-1zM1 8h1v1h-1zM4 8h7v1h-7zM1 9h1v1h-1zM3 9h1v1h-1zM7 9h1v1h-1zM1 10h1v1h-1zM3 10h1v1h-1zM8 10h1v1h-1zM1 11h1v1h-1zM3 11h1v1h-1zM6 11h1v1h-1zM8 11h1v1h-1zM10 11h1v1h-1zM1 12h1v1h-1zM4 12h2v1h-2zM7 12h1v1h-1zM9 12h2v1h-2zM0 13h1v1h-1zM3 13h1v1h-1zM7 13h1v1h-1zM9 13h2v1h-2z"/><path id="g69" d="M4 3h1v1h-1zM3 4h5v1h-5zM3 5h1v1h-1zM7 5h1v1h-1zM2 6h1v1h-1zM6 6h1v1h-1zM1 7h9v1h-9zM2 8h1v1h-1zM6 8h1v1h-1zM9 8h1v1h-1zM2 9h1v1h-1zM6 9h1v1h-1zM9 9h1v1h-1zM2 10h8v1h-8zM2 11h1v1h-1zM2 12h1v1h-1zM11 12h1v1h-1zM2 13h1v1h-1zM10 13h1v1h-1zM3 14h8v1h-8z"/><path id="g70" d="M4 3h1v1h-1zM7 3h1v1h-1zM4 4h1v1h-1zM7 4h1v1h-1zM4 5h1v1h-1zM7 5h1v1h-1zM1 6h10v1h-10zM1 7h1v1h-1zM4 7h1v1h-1zM7 7h1v1h-1zM10 7h1v1h-1zM1 8h1v1h-1zM4 8h1v1h-1zM7 8h1v1h-1zM10 8h1v1h-1zM1 9h10v1h-10zM1 10h1v1h-1zM4 10h1v1h-1zM7 10h1v1h-1zM10 10h1v1h-1zM1 11h1v1h-1zM4 11h1v1h-1zM7 11h1v1h-1zM10 11h1v1h-1zM1 12h1v1h-1zM4 12h1v1h-1zM7 12h1v1h-1zM10 12h1v1h-1zM1 13h10v1h-10zM1 14h1v1h-1zM10 14h1v1h-1z"/><path id="g71" d="M3 3h1v1h-1zM7 3h1v1h-1zM2 4h1v1h-1zM7 4h1v1h-1zM9 4h2v1h-2zM2 5h1v1h-1zM7 5h1v1h-1zM9 5h2v1h-2zM1 6h1v1h-1zM4 6h5v1h-5zM1 7h3v1h-3zM7 7h1v1h-1zM2 8h1v1h-1zM7 8h4v1h-4zM2 9h1v1h-1zM5 9h3v1h-3zM1 10h4v1h-4zM7 10h1v1h-1zM10 10h1v1h-1zM8 11h2v1h-2zM3 12h2v1h-2zM8 12h1v1h-1zM1 13h2v1h-2zM6 13h5v1h-5zM5 14h1v1h-1zM9 14h2v1h-2z"/><path id="g72" d="M3 2h1v1h-1zM1 3h10v1h-10zM2 4h1v1h-1zM8 4h1v1h-1zM2 5h1v1h-1zM4 5h1v1h-1zM6 5h5v1h-5zM1 6h6v1h-6zM8 6h1v1h-1zM10 6h1v1h-1zM1 7h1v1h-1zM4 7h1v1h-1zM6 7h1v1h-1zM8 7h1v1h-1zM10 7h1v1h-1zM1 8h3v1h-3zM6 8h1v1h-1zM8 8h1v1h-1zM10 8h1v1h-1zM1 9h1v1h-1zM4 9h1v1h-1zM6 9h1v1h-1zM8 9h1v1h-1zM10 9h1v1h-1zM1 10h3v1h-3zM6 10h1v1h-1zM8 10h1v1h-1zM10 10h1v1h-1zM1 11h1v1h-1zM4 11h2v1h-2zM8 11h1v1h-1zM1 12h1v1h-1zM3 12h1v1h-1zM7 12h1v1h-1zM10 12h1v1h-1zM0 13h1v1h-1zM2 13h1v1h-1zM5 13h2v1h-2zM10 13h1v1h-1z"/><path id="g73" d="M5 3h1v1h-1zM1 4h10v1h-10zM2 5h8v1h-8zM2 6h1v1h-1zM5 6h1v1h-1zM9 6h1v1h-1zM2 7h8v1h-8zM5 8h1v1h-1zM2 9h8v1h-8zM1 10h10v1h-10zM5 11h1v1h-1zM9 11h1v1h-1zM2 12h8v1h-8zM5 13h1v1h-1zM9 13h1v1h-1zM4 14h2v1h-2z"/><path id="g74" d="M7 3h1v1h-1zM1 4h1v1h-1zM5 4h1v1h-1zM7 4h1v1h-1zM2 5h1v1h-1zM5 5h6v1h-6zM4 6h1v1h-1zM7 6h1v1h-1zM7 7h1v1h-1zM1 8h2v1h-2zM4 8h7v1h-7zM2 9h1v1h-1zM6 9h1v1h-1zM8 9h1v1h-1zM2 10h1v1h-1zM6 10h1v1h-1zM8 10h1v1h-1zM2 11h1v1h-1zM5 11h1v1h-1zM8 11h1v1h-1zM10 11h1v1h-1zM2 12h3v1h-3zM8 12h3v1h-3zM1 13h1v1h-1zM3 13h2v1h-2zM11 13h1v1h-1zM1 14h1v1h-1zM4 14h7v1h-7z"/><path id="g75" d="M2 3h1v1h-1zM2 4h1v1h-1zM5 4h6v1h-6zM2 5h1v1h-1zM6 5h1v1h-1zM9 5h1v1h-1zM1 6h3v1h-3zM7 6h2v1h-2zM2 7h1v1h-1zM7 7h2v1h-2zM2 8h1v1h-1zM4 8h3v1h-3zM9 8h3v1h-3zM2 9h2v1h-2zM7 9h1v1h-1zM1 10h2v1h-2zM5 10h6v1h-6zM2 11h1v1h-1zM7 11h1v1h-1zM2 12h1v1h-1zM4 12h7v1h-7zM2 13h1v1h-1zM7 13h1v1h-1zM1 14h2v1h-2zM7 14h1v1h-1z"/><path id="g76" d="M7 2h1v1h-1zM3 3h1v1h-1zM7 3h1v1h-1zM1 4h5v1h-5zM7 4h5v1h-5zM2 5h1v1h-1zM6 5h1v1h-1zM10 5h1v1h-1zM2 6h1v1h-1zM6 6h2v1h-2zM9 6h1v1h-1zM2 7h3v1h-3zM6 7h2v1h-2zM9 7h1v1h-1zM2 8h1v1h-1zM4 8h1v1h-1zM7 8h1v1h-1zM9 8h1v1h-1zM2 9h1v1h-1zM4 9h1v1h-1zM7 9h1v1h-1zM9 9h1v1h-1zM2 10h1v1h-1zM4 10h1v1h-1zM8 10h1v1h-1zM1 11h1v1h-1zM4 11h1v1h-1zM7 11h3v1h-3zM1 12h1v1h-1zM4 12h1v1h-1zM6 12h2v1h-2zM9 12h2v1h-2zM3 13h4v1h-4zM10 13h1v1h-1z"/><path id="g77" d="M5 4h1v1h-1zM5 5h1v1h-1zM5 6h1v1h-1zM1 7h10v1h-10zM5 8h2v1h-2zM5 9h2v1h-2zM4 10h1v1h-1zM7 10h1v1h-1zM4 11h1v1h-1zM7 11h1v1h-1zM3 12h1v1h-1zM8 12h1v1h-1zM2 13h1v1h-1zM9 13h1v1h-1zM1 14h1v1h-1zM10 14h1v1h-1z"/><path id="g78" d="M3 2h1v1h-1zM7 2h1v1h-1zM2 3h1v1h-1zM4 3h7v1h-7zM2 4h1v1h-1zM5 4h1v1h-1zM9 4h1v1h-1zM2 5h1v1h-1zM5 5h1v1h-1zM9 5h1v1h-1zM1 6h2v1h-2zM6 6h1v1h-1zM8 6h1v1h-1zM0 7h1v1h-1zM2 7h1v1h-1zM4 7h8v1h-8zM2 8h1v1h-1zM2 9h1v1h-1zM5 9h5v1h-5zM2 10h1v1h-1zM5 10h1v1h-1zM9 10h1v1h-1zM2 11h1v1h-1zM5 11h1v1h-1zM9 11h1v1h-1zM2 12h1v1h-1zM5 12h5v1h-5zM2 13h1v1h-1zM5 13h1v1h-1z"/><path id="g79" d="M1 2h1v1h-1zM3 2h1v1h-1zM5 2h1v1h-1zM7 2h1v1h-1zM1 3h1v1h-1zM3 3h2v1h-2zM7 3h1v1h-1zM1 4h5v1h-5zM7 4h4v1h-4zM2 5h3v1h-3zM7 5h1v1h-1zM9 5h1v1h-1zM2 6h2v1h-2zM5 6h1v1h-1zM7 6h1v1h-1zM9 6h1v1h-1zM1 7h1v1h-1zM3 7h1v1h-1zM6 7h2v1h-2zM9 7h1v1h-1zM3 8h1v1h-1zM6 8h2v1h-2zM9 8h1v1h-1zM1 9h5v1h-5zM8 9h2v1h-2zM2 10h1v1h-1zM4 10h1v1h-1zM8 10h1v1h-1zM2 11h3v1h-3zM8 11h2v1h-2zM2 12h3v1h-3zM7 12h1v1h-1zM10 12h1v1h-1zM1 13h1v1h-1zM6 13h1v1h-1zM10 13h1v1h-1z"/><path id="g80" d="M7 2h2v1h-2zM3 3h2v1h-2zM7 3h2v1h-2zM1 4h12v1h-12zM2 5h2v1h-2zM6 5h2v1h-2zM10 5h2v1h-2zM2 6h2v1h-2zM6 6h5v1h-5zM2 7h9v1h-9zM2 8h4v1h-4zM7 8h4v1h-4zM2 9h4v1h-4zM7 9h4v1h-4zM2 10h4v1h-4zM8 10h2v1h-2zM1 11h2v1h-2zM4 11h2v1h-2zM7 11h4v1h-4zM1 12h2v1h-2zM4 12h8v1h-8zM3 13h5v1h-5zM10 13h2v1h-2z"/><path id="g81" d="M5 4h2v1h-2zM5 5h2v1h-2zM5 6h2v1h-2zM1 7h11v1h-11zM5 8h3v1h-3zM5 9h3v1h-3zM4 10h2v1h-2zM7 10h2v1h-2zM4 11h2v1h-2zM7 11h2v1h-2zM3 12h2v1h-2zM8 12h2v1h-2zM2 13h2v1h-2zM9 13h2v1h-2zM1 14h2v1h-2zM10 14h2v1h-2z"/><path id="g82" d="M3 2h2v1h-2zM7 2h2v1h-2zM2 3h10v1h-10zM2 4h2v1h-2zM5 4h2v1h-2zM9 4h2v1h-2zM2 5h2v1h-2zM5 5h2v1h-2zM9 5h2v1h-2zM1 6h3v1h-3zM6 6h4v1h-4zM0 7h13v1h-13zM2 8h2v1h-2zM2 9h2v1h-2zM5 9h6v1h-6zM2 10h2v1h-2zM5 10h2v1h-2zM9 10h2v1h-2zM2 11h2v1h-2zM5 11h2v1h-2zM9 11h2v1h-2zM2 12h2v1h-2zM5 12h6v1h-6zM2 13h2v1h-2zM5 13h2v1h-2z"/><path id="g83" d="M1 2h8v1h-8zM1 3h5v1h-5zM7 3h2v1h-2zM1 4h11v1h-11zM2 5h4v1h-4zM7 5h4v1h-4zM2 6h9v1h-9zM1 7h4v1h-4zM6 7h5v1h-5zM3 8h2v1h-2zM6 8h5v1h-5zM1 9h6v1h-6zM8 9h3v1h-3zM2 10h4v1h-4zM8 10h2v1h-2zM2 11h4v1h-4zM8 11h3v1h-3zM2 12h4v1h-4zM7 12h2v1h-2zM10 12h2v1h-2zM1 13h2v1h-2zM6 13h2v1h-2zM10 13h2v1h-2z"/><path id="g84" d="M1 4h10v1h-10zM9 5h1v1h-1zM9 6h1v1h-1zM2 7h5v1h-5zM9 7h1v1h-1zM2 8h1v1h-1zM6 8h1v1h-1zM9 8h1v1h-1zM2 9h1v1h-1zM6 9h1v1h-1zM9 9h1v1h-1zM2 10h1v1h-1zM6 10h1v1h-1zM9 10h1v1h-1zM2 11h5v1h-5zM9 11h1v1h-1zM2 12h1v1h-1zM9 12h1v1h-1zM9 13h1v1h-1zM7 14h3v1h-3z"/><path id="g85" d="M3 2h1v1h-1zM7 2h1v1h-1zM3 3h9v1h-9zM2 4h1v1h-1zM7 4h1v1h-1zM2 5h1v1h-1zM7 5h1v1h-1zM1 6h2v1h-2zM4 6h7v1h-7zM0 7h1v1h-1zM2 7h1v1h-1zM4 7h1v1h-1zM7 7h1v1h-1zM10 7h1v1h-1zM2 8h1v1h-1zM4 8h7v1h-7zM2 9h1v1h-1zM4 9h1v1h-1zM7 9h1v1h-1zM2 10h1v1h-1zM5 10h1v1h-1zM7 10h1v1h-1zM2 11h1v1h-1zM6 11h1v1h-1zM2 12h1v1h-1zM5 12h4v1h-4zM2 13h1v1h-1zM4 13h1v1h-1zM9 13h2v1h-2z"/><path id="g86" d="M2 4h9v1h-9zM2 5h1v1h-1zM6 5h1v1h-1zM10 5h1v1h-1zM2 6h1v1h-1zM6 6h1v1h-1zM10 6h1v1h-1zM2 7h9v1h-9zM2 8h1v1h-1zM6 8h1v1h-1zM10 8h1v1h-1zM2 9h1v1h-1zM6 9h1v1h-1zM10 9h1v1h-1zM2 10h9v1h-9zM2 11h1v1h-1zM6 11h1v1h-1zM10 11h1v1h-1zM1 12h1v1h-1zM6 12h1v1h-1zM10 12h1v1h-1zM1 13h1v1h-1zM6 13h1v1h-1zM10 13h1v1h-1zM0 14h1v1h-1zM6 14h1v1h-1zM8 14h2v1h-2z"/><path id="g87" d="M1 2h1v1h-1zM7 2h1v1h-1zM2 3h1v1h-1zM4 3h7v1h-7zM5 4h1v1h-1zM8 4h1v1h-1zM4 5h1v1h-1zM9 5h2v1h-2zM1 6h1v1h-1zM3 6h1v1h-1zM6 6h1v1h-1zM8 6h1v1h-1zM10 6h1v1h-1zM2 7h1v1h-1zM5 7h1v1h-1zM8 7h1v1h-1zM4 8h4v1h-4zM9 8h1v1h-1zM2 9h1v1h-1zM5 9h3v1h-3zM10 9h1v1h-1zM2 10h1v1h-1zM4 10h2v1h-2zM8 10h2v1h-2zM2 11h2v1h-2zM5 11h1v1h-1zM8 11h2v1h-2zM1 12h1v1h-1zM5 12h3v1h-3zM9 12h2v1h-2zM1 13h1v1h-1zM5 13h1v1h-1z"/><path id="g88" d="M2 3h1v1h-1zM8 3h1v1h-1zM2 4h1v1h-1zM7 4h2v1h-2zM1 5h4v1h-4zM7 5h2v1h-2zM1 6h1v1h-1zM6 6h1v1h-1zM9 6h1v1h-1zM1 7h1v1h-1zM3 7h1v1h-1zM5 7h1v1h-1zM10 7h1v1h-1zM1 8h4v1h-4zM6 8h1v1h-1zM9 8h1v1h-1zM3 9h1v1h-1zM6 9h1v1h-1zM8 9h2v1h-2zM3 10h1v1h-1zM6 10h2v1h-2zM2 11h3v1h-3zM6 11h1v1h-1zM1 12h1v1h-1zM3 12h1v1h-1zM6 12h1v1h-1zM10 12h1v1h-1zM3 13h1v1h-1zM6 13h1v1h-1zM10 13h1v1h-1zM3 14h1v1h-1zM6 14h5v1h-5z"/><path id="g89" d="M7 2h1v1h-1zM2 3h1v1h-1zM4 3h7v1h-7zM2 4h1v1h-1zM4 4h1v1h-1zM10 4h1v1h-1zM1 5h1v1h-1zM3 5h1v1h-1zM5 5h1v1h-1zM7 5h4v1h-4zM1 6h3v1h-3zM5 6h1v1h-1zM8 6h1v1h-1zM2 7h1v1h-1zM5 7h1v1h-1zM8 7h1v1h-1zM2 8h1v1h-1zM4 8h2v1h-2zM7 8h4v1h-4zM1 9h5v1h-5zM7 9h1v1h-1zM10 9h1v1h-1zM5 10h1v1h-1zM7 10h4v1h-4zM2 11h2v1h-2zM5 11h1v1h-1zM7 11h1v1h-1zM10 11h1v1h-1zM1 12h1v1h-1zM5 12h1v1h-1zM7 12h4v1h-4zM5 13h1v1h-1zM7 13h1v1h-1zM10 13h1v1h-1z"/><path id="g90" d="M3 3h1v1h-1zM8 3h1v1h-1zM3 4h1v1h-1zM8 4h1v1h-1zM10 4h1v1h-1zM1 5h5v1h-5zM8 5h1v1h-1zM10 5h1v1h-1zM1 6h10v1h-10zM1 7h1v1h-1zM5 7h1v1h-1zM8 7h1v1h-1zM1 8h1v1h-1zM5 8h1v1h-1zM7 8h1v1h-1zM1 9h5v1h-5zM7 9h2v1h-2zM3 10h1v1h-1zM7 10h2v1h-2zM1 11h1v1h-1zM3 11h1v1h-1zM5 11h1v1h-1zM7 11h2v1h-2zM1 12h1v1h-1zM3 12h1v1h-1zM5 12h2v1h-2zM8 12h1v1h-1zM3 13h1v1h-1zM6 13h1v1h-1zM8 13h1v1h-1zM11 13h1v1h-1zM2 14h2v1h-2zM5 14h1v1h-1zM9 14h2v1h-2z"/><path id="g91" d="M7 3h1v1h-1zM2 4h1v1h-1zM7 4h1v1h-1zM10 4h1v1h-1zM2 5h1v1h-1zM5 5h6v1h-6zM1 6h1v1h-1zM4 6h1v1h-1zM7 6h1v1h-1zM9 6h1v1h-1zM1 7h3v1h-3zM5 7h7v1h-7zM2 8h1v1h-1zM7 8h1v1h-1zM2 9h1v1h-1zM6 9h5v1h-5zM1 10h3v1h-3zM5 10h2v1h-2zM10 10h1v1h-1zM6 11h5v1h-5zM3 12h2v1h-2zM6 12h1v1h-1zM10 12h1v1h-1zM1 13h2v1h-2zM6 13h5v1h-5zM6 14h1v1h-1zM10 14h1v1h-1z"/><path id="g92" d="M5 2h1v1h-1zM1 3h10v1h-10zM1 4h1v1h-1zM10 4h1v1h-1zM1 5h1v1h-1zM10 5h1v1h-1zM3 6h6v1h-6zM7 7h1v1h-1zM6 8h1v1h-1zM1 9h10v1h-10zM5 10h1v1h-1zM5 11h1v1h-1zM5 12h1v1h-1zM4 13h2v1h-2z"/></defs><clipPath id="cl"><rect x="0" y="0" width="183" height="747"/><rect x="184" y="0" width="866" height="747"/></clipPath><g clip-path="url(#cl)"><use href="#g0" x="189" y="4" fill="#fff"/><use href="#g1" x="202" y="4" fill="#fff"/><use href="#g2" x="215" y="4" fill="#fff"/><use href="#g3" x="228" y="4" fill="#fff"/><use href="#g4" x="241" y="4" fill="#fff"/><use href="#g5" x="254" y="4" fill="#fff"/><use href="#g6" x="287" y="4" fill="#fff"/><use href="#g7" x="300" y="4" fill="#fff"/><use href="#g8" x="317" y="4" fill="#fff"/><use href="#g9" x="330" y="4" fill="#fff"/><use href="#g10" x="343" y="4" fill="#fff"/><use href="#g11" x="356" y="4" fill="#fff"/><use href="#g12" x="21" y="26" fill="#000"/><use href="#g13" x="33" y="26" fill="#000"/><use href="#g14" x="76" y="26" fill="#000"/><use href="#g15" x="88" y="26" fill="#000"/><use href="#g16" x="130" y="26" fill="#000"/><use href="#g17" x="142" y="26" fill="#000"/><use href="#g18" x="185" y="26" fill="#000"/><use href="#g19" x="197" y="26" fill="#000"/><use href="#g20" x="243" y="26" fill="#000"/><use href="#g21" x="255" y="26" fill="#000"/><use href="#g22" x="21" y="90" fill="#000"/><use href="#g23" x="34" y="90" fill="#000"/><use href="#g10" x="47" y="90" fill="#000"/><use href="#g11" x="60" y="90" fill="#000"/><use href="#g12" x="21" y="107" fill="#808080"/><use href="#g13" x="33" y="107" fill="#808080"/><use href="#g24" x="45" y="107" fill="#808080"/><use href="#g25" x="57" y="107" fill="#808080"/><use href="#g26" x="161" y="107" fill="#808080"/><use href="#g27" x="173" y="107" fill="#808080"/><use href="#g28" x="21" y="124" fill="#808080"/><use href="#g29" x="33" y="124" fill="#808080"/><use href="#g30" x="45" y="124" fill="#808080"/><use href="#g31" x="57" y="124" fill="#808080"/><use href="#g32" x="99" y="124" fill="#808080"/><use href="#g33" x="111" y="124" fill="#808080"/><use href="#g26" x="123" y="124" fill="#808080"/><use href="#g27" x="135" y="124" fill="#808080"/><use href="#g34" x="21" y="141" fill="#808080"/><use href="#g35" x="33" y="141" fill="#808080"/><use href="#g36" x="45" y="141" fill="#808080"/><use href="#g37" x="57" y="141" fill="#808080"/><use href="#g34" x="21" y="158" fill="#808080"/><use href="#g35" x="33" y="158" fill="#808080"/><use href="#g38" x="45" y="158" fill="#808080"/><use href="#g39" x="57" y="158" fill="#808080"/><use href="#g28" x="21" y="175" fill="#808080"/><use href="#g40" x="33" y="175" fill="#808080"/><use href="#g41" x="45" y="175" fill="#808080"/><use href="#g42" x="57" y="175" fill="#808080"/><use href="#g43" x="21" y="192" fill="#808080"/><use href="#g44" x="33" y="192" fill="#808080"/><use href="#g38" x="45" y="192" fill="#808080"/><use href="#g39" x="57" y="192" fill="#808080"/><use href="#g45" x="21" y="209" fill="#808080"/><use href="#g46" x="33" y="209" fill="#808080"/><use href="#g47" x="45" y="209" fill="#808080"/><use href="#g48" x="57" y="209" fill="#808080"/><use href="#g6" x="21" y="226" fill="#000"/><use href="#g7" x="34" y="226" fill="#000"/><use href="#g49" x="47" y="226" fill="#000"/><use href="#g50" x="60" y="226" fill="#000"/><use href="#g38" x="21" y="243" fill="#000"/><use href="#g39" x="33" y="243" fill="#000"/><use href="#g51" x="45" y="243" fill="#000"/><use href="#g52" x="57" y="243" fill="#000"/><use href="#g53" x="21" y="260" fill="#000"/><use href="#g54" x="33" y="260" fill="#000"/><use href="#g55" x="45" y="260" fill="#000"/><use href="#g56" x="57" y="260" fill="#000"/><use href="#g57" x="21" y="277" fill="#000"/><use href="#g58" x="33" y="277" fill="#000"/><use href="#g34" x="45" y="277" fill="#000"/><use href="#g35" x="57" y="277" fill="#000"/><use href="#g38" x="69" y="277" fill="#000"/><use href="#g39" x="81" y="277" fill="#000"/><use href="#g59" x="21" y="294" fill="#000"/><use href="#g60" x="33" y="294" fill="#000"/><use href="#g34" x="45" y="294" fill="#000"/><use href="#g35" x="57" y="294" fill="#000"/><use href="#g38" x="69" y="294" fill="#000"/><use href="#g39" x="81" y="294" fill="#000"/><use href="#g61" x="21" y="311" fill="#000"/><use href="#g60" x="33" y="311" fill="#000"/><use href="#g34" x="45" y="311" fill="#000"/><use href="#g35" x="57" y="311" fill="#000"/><use href="#g38" x="69" y="311" fill="#000"/><use href="#g39" x="81" y="311" fill="#000"/><use href="#g62" x="21" y="328" fill="#000"/><use href="#g63" x="34" y="328" fill="#000"/><use href="#g64" x="47" y="328" fill="#000"/><use href="#g65" x="60" y="328" fill="#000"/><use href="#g66" x="21" y="345" fill="#000"/><use href="#g67" x="33" y="345" fill="#000"/><use href="#g68" x="45" y="345" fill="#000"/><use href="#g69" x="57" y="345" fill="#000"/><use href="#g70" x="21" y="362" fill="#000"/><use href="#g71" x="33" y="362" fill="#000"/><use href="#g72" x="45" y="362" fill="#000"/><use href="#g69" x="57" y="362" fill="#000"/><use href="#g73" x="21" y="379" fill="#000"/><use href="#g13" x="33" y="379" fill="#000"/><use href="#g72" x="45" y="379" fill="#000"/><use href="#g69" x="57" y="379" fill="#000"/><use href="#g47" x="21" y="396" fill="#000"/><use href="#g48" x="33" y="396" fill="#000"/><use href="#g29" x="45" y="396" fill="#000"/><use href="#g74" x="57" y="396" fill="#000"/><use href="#g75" x="69" y="396" fill="#000"/><use href="#g76" x="21" y="413" fill="#000"/><use href="#g77" x="33" y="413" fill="#000"/><use href="#g78" x="45" y="413" fill="#000"/><use href="#g79" x="57" y="413" fill="#000"/><use href="#g80" x="9" y="671" fill="#000"/><use href="#g81" x="22" y="671" fill="#000"/><use href="#g82" x="35" y="671" fill="#000"/><use href="#g83" x="48" y="671" fill="#000"/><use href="#g84" x="9" y="685" fill="#000"/><use href="#g85" x="21" y="685" fill="#000"/><use href="#g86" x="33" y="685" fill="#000"/><use href="#g87" x="45" y="685" fill="#000"/><use href="#g88" x="57" y="685" fill="#000"/><use href="#g89" x="69" y="685" fill="#000"/><use href="#g76" x="81" y="685" fill="#000"/><use href="#g90" x="5" y="725" fill="#000"/><use href="#g91" x="17" y="725" fill="#000"/><use href="#g79" x="968" y="725" fill="#000"/><use href="#g92" x="980" y="725" fill="#000"/></g></svg>
</body></html>
